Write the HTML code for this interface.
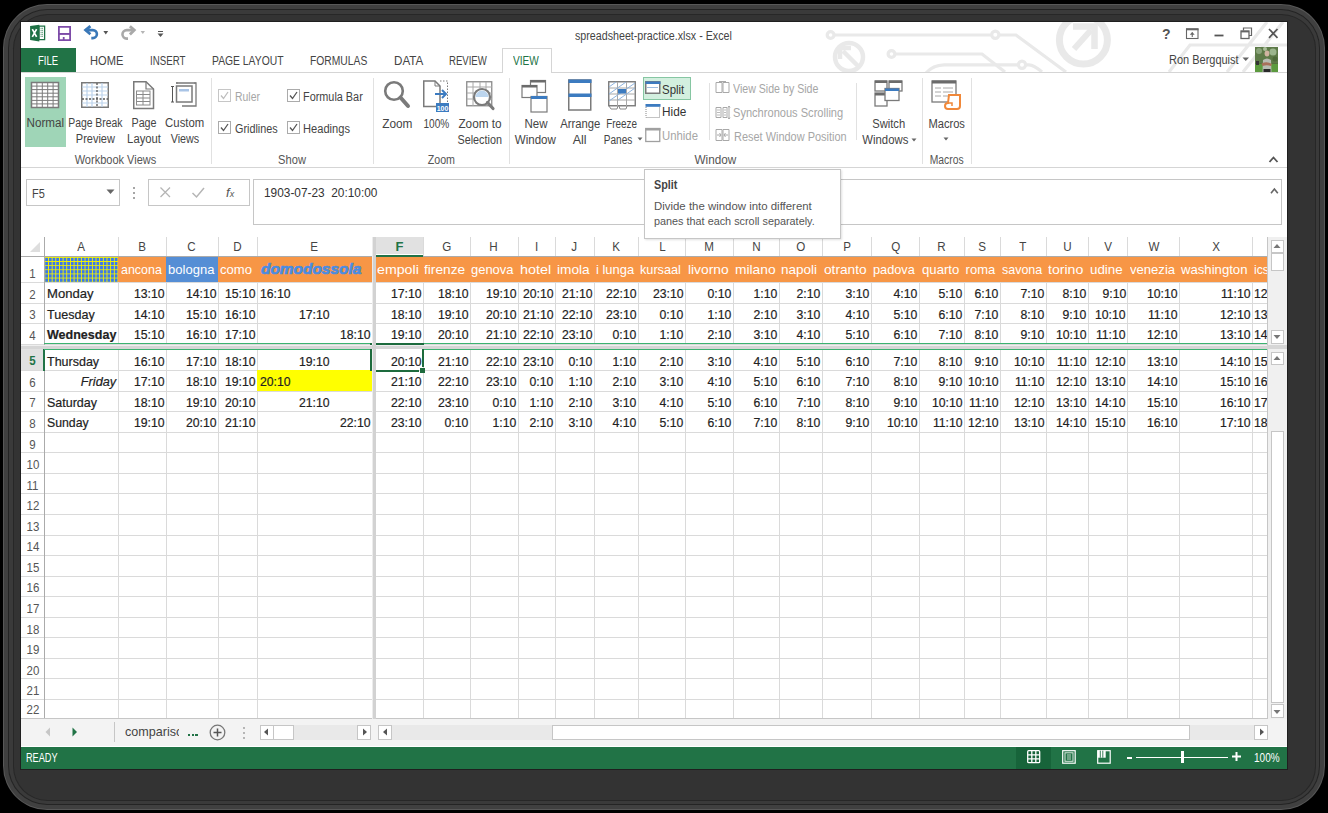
<!DOCTYPE html>
<html><head><meta charset="utf-8"><style>
html,body{margin:0;padding:0;}
body{width:1328px;height:813px;background:#000;position:relative;overflow:hidden;font-family:"Liberation Sans", sans-serif;}
.r{position:absolute;}
.t{position:absolute;line-height:1;white-space:nowrap;}
.t span{display:inline-block;}
svg.r{overflow:visible;}
</style></head><body>
<div class="r" style="left:3.00px;top:4.00px;width:1322.00px;height:806.00px;border-radius:44px;background:#585858;"></div>
<div class="r" style="left:4.20px;top:5.20px;width:1319.60px;height:803.60px;border-radius:42.8px;background:#404040;"></div>
<div class="r" style="left:8.00px;top:9.00px;width:1312.00px;height:796.00px;border-radius:39px;background:#242424;"></div>
<div class="r" style="left:9.00px;top:10.00px;width:1310.00px;height:794.00px;border-radius:38px;background:#3a3a3a;"></div>
<div class="r" style="left:12.50px;top:13.50px;width:1303.00px;height:787.00px;border-radius:34.5px;background:#272727;"></div>
<div class="r" style="left:13.50px;top:14.50px;width:1301.00px;height:785.00px;border-radius:33.5px;background:#333333;"></div>
<div class="r" style="left:20.00px;top:21.00px;width:1268.00px;height:749.00px;background:#1f1f1f;"></div>
<div class="r" style="left:21.00px;top:22.00px;width:1266.00px;height:747.00px;background:#fff;"></div>
<svg class="r" style="left:821px;top:22px;overflow:hidden" width="466" height="50" viewBox="0 0 466 50"><g transform="translate(-821,-22)" stroke="#e9e9e9" fill="none">
<g stroke-width="3.2">
<path d="M834 35 H991.5 M999 35 H1016 L1066 72"/><circle cx="830.6" cy="35" r="3.4"/><circle cx="995.3" cy="34.8" r="3.6"/>
<path d="M895 54 H982 L1005 72"/><circle cx="891.5" cy="54" r="3.4"/>
<path d="M926 73 Q933 65 944 64.8 H1018 M1025.5 64.8 H1029 Q1034 65 1042 72"/><circle cx="1022" cy="64.8" r="3.6"/>
<path d="M1169 72 L1190 45 H1290 M1227 72 L1267 22 M1243 72 L1283 22"/>
</g>
<circle cx="849" cy="57" r="14" stroke-width="4.5"/><path d="M858 66 L843 51" stroke-width="4.5"/><path d="M840 59 V48 H851" stroke-width="4.5"/>
<circle cx="1083.4" cy="40" r="24" stroke-width="7"/><path d="M1074 49 L1091 30" stroke-width="6"/><path d="M1073 26.5 H1094.5 V49" stroke-width="6.5"/>
</g></svg>
<div class="t" id="t1" style="left:575.00px;top:30.34px;font-size:12px;color:#444;"><span style="transform:scaleX(0.8905);transform-origin:0 0">spreadsheet-practice.xlsx - Excel</span></div>
<svg class="r" style="left:29px;top:24px;" width="18" height="19" viewBox="0 0 18 19">
<path d="M10 2.2 H15.6 V15.6 H10 Z" fill="#fff" stroke="#1e7145" stroke-width="1.3"/>
<path d="M11.6 4.3 H14 M11.6 6.3 H14 M11.6 8.3 H14 M11.6 10.3 H14 M11.6 12.3 H14" stroke="#1e7145" stroke-width="0.9" stroke-dasharray="1,0.6"/>
<path d="M1.1 2 L10.3 0.8 V17.4 L1.1 16 Z" fill="#1e7145"/>
<path d="M3.3 5.2 L7.6 12.8 M7.6 5.2 L3.3 12.8" stroke="#fff" stroke-width="1.7"/></svg>
<svg class="r" style="left:58px;top:26px;" width="13" height="15" viewBox="0 0 13 15">
<path d="M0.9 0.9 H12.1 V14.1 H0.9 Z" fill="#fff" stroke="#7d4ba8" stroke-width="1.8"/>
<rect x="0.9" y="7" width="11.2" height="1.9" fill="#7d4ba8"/>
<rect x="4.8" y="11" width="1.8" height="3" fill="#7d4ba8"/></svg>
<svg class="r" style="left:83px;top:25px;" width="28" height="16" viewBox="0 0 28 16">
<path d="M2.6 5.1 H9.9 A4 4 0 0 1 9.9 13.1 H8.3" fill="none" stroke="#3a78b8" stroke-width="2.6"/>
<path d="M7.4 1.2 L2.6 5.1 L7.4 9.2" fill="none" stroke="#3a78b8" stroke-width="2.8" stroke-linejoin="miter"/>
<path d="M20.4 5.9 H25.2 L22.8 9.5 Z" fill="#555"/></svg>
<svg class="r" style="left:120px;top:25px;" width="28" height="16" viewBox="0 0 28 16">
<path d="M14 5.1 H6.7 A4.25 4.25 0 0 0 6.7 13.6 H8" fill="none" stroke="#a9a9a9" stroke-width="2.6"/>
<path d="M9.9 1.2 L14.3 5.1 L9.9 9.4" fill="none" stroke="#a9a9a9" stroke-width="2.8"/>
<path d="M20.6 5.9 H25 L22.8 9 Z" fill="#b5b5b5"/></svg>
<svg class="r" style="left:156px;top:29px;" width="9" height="10" viewBox="0 0 9 10"><path d="M2 2.5 H7" stroke="#555" stroke-width="1"/><path d="M1.5 4.5 H7.5 L4.5 8 Z" fill="#555"/></svg>
<div class="t" id="t2" style="left:1162.00px;top:26.65px;font-size:14px;color:#555;font-weight:bold;"><span>?</span></div>
<svg class="r" style="left:1185px;top:27px;" width="15" height="13" viewBox="0 0 15 13"><rect x="1.5" y="2" width="11.5" height="9.5" fill="none" stroke="#666" stroke-width="1.1"/><path d="M1 2.3 H13.5" stroke="#666" stroke-width="2"/><path d="M7.25 10 V5.5" stroke="#666" stroke-width="1.1"/><path d="M4.8 7.8 L7.25 5 L9.7 7.8 Z" fill="#666"/></svg>
<svg class="r" style="left:1213px;top:27px;" width="12" height="13" viewBox="0 0 12 13"><path d="M1.5 8.5 H10.5" stroke="#555" stroke-width="1.8"/></svg>
<svg class="r" style="left:1240px;top:27px;" width="13" height="13" viewBox="0 0 13 13"><path d="M3.5 3.5 V1 H11.5 V8.5 H9" fill="none" stroke="#666" stroke-width="1.2"/><rect x="1" y="4" width="8" height="7.5" fill="none" stroke="#666" stroke-width="1.3"/><path d="M1 4.6 H9" stroke="#666" stroke-width="1.6"/></svg>
<svg class="r" style="left:1266px;top:27px;" width="14" height="13" viewBox="0 0 14 13"><path d="M3 2 L11.5 10.8 M11.5 2 L3 10.8" stroke="#555" stroke-width="1.7"/></svg>
<div class="t" id="t3" style="left:1169.00px;top:54.34px;font-size:12px;color:#444;"><span style="transform:scaleX(0.9152);transform-origin:0 0">Ron Bergquist</span></div>
<svg class="r" style="left:1242px;top:57px;" width="8" height="5" viewBox="0 0 8 5"><path d="M0.5 0.5 H7 L3.75 4 Z" fill="#666"/></svg>
<svg class="r" style="left:1255px;top:47px;" width="23" height="25" viewBox="0 0 23 25">
<rect width="23" height="25" fill="#55713f"/>
<rect x="0" y="0" width="23" height="16" fill="#5d7a48"/>
<circle cx="4" cy="4" r="3" fill="#8aa37a"/><circle cx="18" cy="5" r="3.5" fill="#9bb58d"/><circle cx="10" cy="2" r="2" fill="#a9bd9a"/><circle cx="20" cy="12" r="2.5" fill="#4d6a3a"/>
<rect x="0" y="17" width="23" height="8" fill="#5c9a3f"/>
<rect x="1" y="14" width="3" height="4" fill="#333"/>
<path d="M8 13 Q12 10 16 13 L16.5 25 H7.5 Z" fill="#b8bcb2"/>
<ellipse cx="12" cy="6.5" rx="2.4" ry="3" fill="#cfb3a0"/>
<path d="M6.5 16.5 Q12 14 17 17 L16 19 Q12 17.5 7.5 19 Z" fill="#a8705a"/>
<rect x="8.5" y="22" width="7" height="3" fill="#2a2a2a"/></svg>
<div class="r" style="left:21.00px;top:47.50px;width:54.70px;height:25.20px;background:#217346;"></div>
<div class="t" id="t4" style="left:37.80px;top:55.04px;font-size:12px;color:#fff;"><span style="transform:scaleX(0.7931);transform-origin:0 0">FILE</span></div>
<div class="r" style="left:21.00px;top:72.00px;width:481.00px;height:1.00px;background:#d5d5d5;"></div>
<div class="r" style="left:552.00px;top:72.00px;width:735.00px;height:1.00px;background:#d5d5d5;"></div>
<div class="r" style="left:502.00px;top:47.50px;width:50.00px;height:25.00px;border:1px solid #d5d5d5;border-bottom:none;box-sizing:border-box;background:#fff;"></div>
<div class="t" id="t5" style="left:90.30px;top:55.04px;font-size:12px;color:#444;"><span style="transform:scaleX(0.9250);transform-origin:0 0">HOME</span></div>
<div class="t" id="t6" style="left:149.90px;top:55.04px;font-size:12px;color:#444;"><span style="transform:scaleX(0.8083);transform-origin:0 0">INSERT</span></div>
<div class="t" id="t7" style="left:212.30px;top:55.04px;font-size:12px;color:#444;"><span style="transform:scaleX(0.8623);transform-origin:0 0">PAGE LAYOUT</span></div>
<div class="t" id="t8" style="left:310.30px;top:55.04px;font-size:12px;color:#444;"><span style="transform:scaleX(0.8592);transform-origin:0 0">FORMULAS</span></div>
<div class="t" id="t9" style="left:393.80px;top:55.04px;font-size:12px;color:#444;"><span style="transform:scaleX(0.9691);transform-origin:0 0">DATA</span></div>
<div class="t" id="t10" style="left:449.30px;top:55.04px;font-size:12px;color:#444;"><span style="transform:scaleX(0.7984);transform-origin:0 0">REVIEW</span></div>
<div class="t" id="t11" style="left:513.30px;top:55.04px;font-size:12px;color:#217346;"><span style="transform:scaleX(0.8412);transform-origin:0 0">VIEW</span></div>
<div class="r" style="left:21.00px;top:167.00px;width:1266.00px;height:1.00px;background:#d5d5d5;"></div>
<div class="r" style="left:211.00px;top:78.00px;width:1.00px;height:86.00px;background:#e1e1e1;"></div>
<div class="r" style="left:373.00px;top:78.00px;width:1.00px;height:86.00px;background:#e1e1e1;"></div>
<div class="r" style="left:508.60px;top:78.00px;width:1.00px;height:86.00px;background:#e1e1e1;"></div>
<div class="r" style="left:922.00px;top:78.00px;width:1.00px;height:86.00px;background:#e1e1e1;"></div>
<div class="r" style="left:970.60px;top:78.00px;width:1.00px;height:86.00px;background:#e1e1e1;"></div>
<div class="r" style="left:708.60px;top:83.00px;width:1.00px;height:57.00px;background:#e1e1e1;"></div>
<div class="r" style="left:856.00px;top:83.00px;width:1.00px;height:57.00px;background:#e1e1e1;"></div>
<div class="r" style="left:24.80px;top:76.60px;width:41.50px;height:70.10px;background:#9fd5b7;"></div>
<div class="t" id="t12" style="left:-15.00px;top:117.14px;font-size:12px;color:#444;width:120.00px;text-align:center;"><span style="transform:scaleX(0.9697);transform-origin:50% 0">Normal</span></div>
<div class="t" id="t13" style="left:35.25px;top:117.14px;font-size:12px;color:#444;width:120.00px;text-align:center;"><span style="transform:scaleX(0.8658);transform-origin:50% 0">Page Break</span></div>
<div class="t" id="t14" style="left:35.60px;top:133.24px;font-size:12px;color:#444;width:120.00px;text-align:center;"><span style="transform:scaleX(0.9136);transform-origin:50% 0">Preview</span></div>
<div class="t" id="t15" style="left:84.45px;top:117.14px;font-size:12px;color:#444;width:120.00px;text-align:center;"><span style="transform:scaleX(0.8954);transform-origin:50% 0">Page</span></div>
<div class="t" id="t16" style="left:84.50px;top:133.24px;font-size:12px;color:#444;width:120.00px;text-align:center;"><span style="transform:scaleX(0.9381);transform-origin:50% 0">Layout</span></div>
<div class="t" id="t17" style="left:125.15px;top:117.14px;font-size:12px;color:#444;width:120.00px;text-align:center;"><span style="transform:scaleX(0.9457);transform-origin:50% 0">Custom</span></div>
<div class="t" id="t18" style="left:125.05px;top:133.24px;font-size:12px;color:#444;width:120.00px;text-align:center;"><span style="transform:scaleX(0.8963);transform-origin:50% 0">Views</span></div>
<div class="t" id="t19" style="left:55.40px;top:153.84px;font-size:12px;color:#555;width:120.00px;text-align:center;"><span style="transform:scaleX(0.9175);transform-origin:50% 0">Workbook Views</span></div>
<div class="t" id="t20" style="left:232.30px;top:153.84px;font-size:12px;color:#555;width:120.00px;text-align:center;"><span style="transform:scaleX(0.9257);transform-origin:50% 0">Show</span></div>
<div class="t" id="t21" style="left:381.00px;top:153.84px;font-size:12px;color:#555;width:120.00px;text-align:center;"><span style="transform:scaleX(0.8896);transform-origin:50% 0">Zoom</span></div>
<div class="t" id="t22" style="left:655.20px;top:153.84px;font-size:12px;color:#555;width:120.00px;text-align:center;"><span style="transform:scaleX(0.9792);transform-origin:50% 0">Window</span></div>
<div class="t" id="t23" style="left:886.50px;top:153.84px;font-size:12px;color:#555;width:120.00px;text-align:center;"><span style="transform:scaleX(0.8591);transform-origin:50% 0">Macros</span></div>
<svg class="r" style="left:31px;top:82px;" width="28" height="26" viewBox="0 0 28 26"><rect x="0.5" y="0.5" width="27" height="25" fill="#fff" stroke="#7a7a7a" stroke-width="1.5"/><path d="M5.9 1 V25" stroke="#7a7a7a" stroke-width="1"/><path d="M11.3 1 V25" stroke="#7a7a7a" stroke-width="1"/><path d="M16.7 1 V25" stroke="#7a7a7a" stroke-width="1"/><path d="M22.1 1 V25" stroke="#7a7a7a" stroke-width="1"/><path d="M1 4.1 H27" stroke="#7a7a7a" stroke-width="1"/><path d="M1 7.6 H27" stroke="#7a7a7a" stroke-width="1"/><path d="M1 11.2 H27" stroke="#7a7a7a" stroke-width="1"/><path d="M1 14.8 H27" stroke="#7a7a7a" stroke-width="1"/><path d="M1 18.4 H27" stroke="#7a7a7a" stroke-width="1"/><path d="M1 21.9 H27" stroke="#7a7a7a" stroke-width="1"/></svg>
<svg class="r" style="left:81px;top:82px;" width="28" height="26" viewBox="0 0 28 26"><rect x="0.75" y="0.75" width="26.5" height="24.5" fill="#fff" stroke="#7a7a7a" stroke-width="1.5"/>
<path d="M6 1 V25 M11 1 V25 M21 1 V25 M1 5 H27 M1 9 H27 M1 13 H27 M1 21 H27" stroke="#bcd3ec" stroke-width="1.2"/>
<path d="M16 1 V25" stroke="#555" stroke-width="1.3" stroke-dasharray="2,1.5"/><path d="M1 17 H27" stroke="#555" stroke-width="1.3" stroke-dasharray="2,1.5"/></svg>
<svg class="r" style="left:133px;top:81px;" width="22" height="29" viewBox="0 0 22 29"><path d="M0.75 0.75 H13 L20.5 8 V27.5 H0.75 Z" fill="#fff" stroke="#7a7a7a" stroke-width="1.5"/><path d="M13 0.75 V8 H20.5" fill="none" stroke="#7a7a7a" stroke-width="1.2"/>
<rect x="3.5" y="10" width="13.5" height="14" fill="none" stroke="#8a8a8a" stroke-width="1"/><path d="M3.5 13.5 H17 M3.5 17 H17 M3.5 20.5 H17 M10 10 V24" stroke="#8a8a8a" stroke-width="1"/></svg>
<svg class="r" style="left:171px;top:81px;" width="28" height="28" viewBox="0 0 28 28"><path d="M5 2 H25 V25 H11" fill="none" stroke="#7a7a7a" stroke-width="1.3"/><path d="M6 1 V3 M24 1 V3" stroke="#7a7a7a"/>
<rect x="5.5" y="5" width="15.5" height="16" fill="#fff" stroke="#7a7a7a" stroke-width="1.5"/><rect x="8" y="8" width="10" height="2.5" fill="#a9c4e6"/>
<path d="M1.5 5.5 V21 M0 5.5 H3 M0 21 H3" stroke="#555" stroke-width="1"/></svg>
<svg class="r" style="left:218px;top:88.5px;" width="13" height="13" viewBox="0 0 13 13"><rect x="0.5" y="0.5" width="12" height="12" fill="#fff" stroke="#c6c6c6"/><path d="M3 6.5 L5.5 9.5 L10 3" fill="none" stroke="#bdbdbd" stroke-width="1.3"/></svg>
<div class="t" id="t24" style="left:234.60px;top:90.84px;font-size:12px;color:#a6a6a6;"><span style="transform:scaleX(0.8680);transform-origin:0 0">Ruler</span></div>
<svg class="r" style="left:287px;top:88.5px;" width="13" height="13" viewBox="0 0 13 13"><rect x="0.5" y="0.5" width="12" height="12" fill="#fff" stroke="#ababab"/><path d="M3 6.5 L5.5 9.5 L10 3" fill="none" stroke="#555" stroke-width="1.3"/></svg>
<div class="t" id="t25" style="left:302.80px;top:90.84px;font-size:12px;color:#444;"><span style="transform:scaleX(0.9056);transform-origin:0 0">Formula Bar</span></div>
<svg class="r" style="left:218px;top:120.7px;" width="13" height="13" viewBox="0 0 13 13"><rect x="0.5" y="0.5" width="12" height="12" fill="#fff" stroke="#ababab"/><path d="M3 6.5 L5.5 9.5 L10 3" fill="none" stroke="#555" stroke-width="1.3"/></svg>
<div class="t" id="t26" style="left:234.60px;top:123.14px;font-size:12px;color:#444;"><span style="transform:scaleX(0.9016);transform-origin:0 0">Gridlines</span></div>
<svg class="r" style="left:287px;top:120.7px;" width="13" height="13" viewBox="0 0 13 13"><rect x="0.5" y="0.5" width="12" height="12" fill="#fff" stroke="#ababab"/><path d="M3 6.5 L5.5 9.5 L10 3" fill="none" stroke="#555" stroke-width="1.3"/></svg>
<div class="t" id="t27" style="left:302.80px;top:123.14px;font-size:12px;color:#444;"><span style="transform:scaleX(0.9270);transform-origin:0 0">Headings</span></div>
<svg class="r" style="left:383px;top:80px;" width="28" height="30" viewBox="0 0 28 30"><circle cx="11" cy="11" r="8.8" fill="none" stroke="#7a7a7a" stroke-width="2.6"/><path d="M17.5 17.5 L25 26" stroke="#7a7a7a" stroke-width="4" stroke-linecap="round"/></svg>
<div class="t" id="t28" style="left:337.00px;top:117.64px;font-size:12px;color:#444;width:120.00px;text-align:center;"><span style="transform:scaleX(0.9874);transform-origin:50% 0">Zoom</span></div>
<svg class="r" style="left:423px;top:80px;" width="27" height="33" viewBox="0 0 27 33"><path d="M0.75 1 H12 L17 6 V26.5 H0.75 Z" fill="#fff" stroke="#7a7a7a" stroke-width="1.5"/><path d="M12 1 V6 H17" fill="none" stroke="#7a7a7a"/>
<path d="M17 1 H24.5 V26" fill="none" stroke="#7a7a7a" stroke-dasharray="1.5,1.5"/>
<path d="M12 14 H23 M19 10 L23 14 L19 18" fill="none" stroke="#3c7bc0" stroke-width="2"/>
<rect x="13" y="23" width="13" height="9" fill="#3c7bc0"/><text x="19.5" y="30.5" font-size="7" font-weight="bold" fill="#fff" text-anchor="middle" font-family="Liberation Sans">100</text></svg>
<div class="t" id="t29" style="left:376.50px;top:117.64px;font-size:12px;color:#444;width:120.00px;text-align:center;"><span style="transform:scaleX(0.8403);transform-origin:50% 0">100%</span></div>
<svg class="r" style="left:466px;top:81px;" width="30" height="30" viewBox="0 0 30 30"><rect x="0.75" y="0.75" width="25" height="24" fill="#fff" stroke="#8a8a8a" stroke-width="1.3"/>
<path d="M1 6 H26 M1 12 H26 M1 18 H26 M7 1 V25 M14 1 V8 M20 1 V25" stroke="#a8a8a8" stroke-width="1"/>
<circle cx="16" cy="16" r="8" fill="#fff" stroke="#7a7a7a" stroke-width="2.2"/><path d="M9.5 16 A6.5 6.5 0 0 1 22.5 16 Z" fill="#bcd5ee"/><path d="M21.5 21.5 L27 27.5" stroke="#7a7a7a" stroke-width="3.2" stroke-linecap="round"/></svg>
<div class="t" id="t30" style="left:419.80px;top:117.64px;font-size:12px;color:#444;width:120.00px;text-align:center;"><span style="transform:scaleX(0.9815);transform-origin:50% 0">Zoom to</span></div>
<div class="t" id="t31" style="left:419.80px;top:133.64px;font-size:12px;color:#444;width:120.00px;text-align:center;"><span style="transform:scaleX(0.8992);transform-origin:50% 0">Selection</span></div>
<svg class="r" style="left:521px;top:79px;" width="28" height="35" viewBox="0 0 28 35"><rect x="9.5" y="1.5" width="15" height="12" fill="#fff" stroke="#7a7a7a" stroke-width="1.2"/><rect x="9.5" y="1" width="15" height="2.5" fill="#6b6b6b"/>
<rect x="1" y="6.5" width="15" height="12" fill="#fff" stroke="#7a7a7a" stroke-width="1.2"/><rect x="1" y="6" width="15" height="2.5" fill="#6b6b6b"/>
<rect x="10" y="17.5" width="16" height="15.5" fill="#fff" stroke="#7a7a7a" stroke-width="1.2"/><rect x="10" y="17" width="16" height="3" fill="#3c7bc0"/></svg>
<div class="t" id="t32" style="left:475.90px;top:117.54px;font-size:12px;color:#444;width:120.00px;text-align:center;"><span style="transform:scaleX(0.9577);transform-origin:50% 0">New</span></div>
<div class="t" id="t33" style="left:475.45px;top:133.54px;font-size:12px;color:#444;width:120.00px;text-align:center;"><span style="transform:scaleX(0.9628);transform-origin:50% 0">Window</span></div>
<svg class="r" style="left:568px;top:79px;" width="24" height="33" viewBox="0 0 24 33"><rect x="0.75" y="1" width="22" height="30" fill="#fff" stroke="#7a7a7a" stroke-width="1.5"/><rect x="0.5" y="0.5" width="23" height="3.5" fill="#3c7bc0"/><rect x="0.5" y="14.5" width="23" height="3.5" fill="#3c7bc0"/></svg>
<div class="t" id="t34" style="left:519.95px;top:117.54px;font-size:12px;color:#444;width:120.00px;text-align:center;"><span style="transform:scaleX(0.9390);transform-origin:50% 0">Arrange</span></div>
<div class="t" id="t35" style="left:519.85px;top:133.54px;font-size:12px;color:#444;width:120.00px;text-align:center;"><span style="transform:scaleX(1.0417);transform-origin:50% 0">All</span></div>
<svg class="r" style="left:608px;top:81px;" width="29" height="29" viewBox="0 0 29 29"><rect x="0.75" y="0.75" width="26.5" height="24" fill="#fff" stroke="#7a7a7a" stroke-width="1.4"/>
<path d="M1 7 H27 M1 13 H27 M1 19 H27 M9.5 1 V25 M18.5 1 V25" stroke="#a8a8a8"/>
<path d="M1 6 L8 1 M1 13 L18 1 M1 20 L27 2 M10 19 L27 7" stroke="#8fb4de" stroke-width="1"/>
<rect x="10" y="8" width="8" height="4.5" fill="#3c7bc0"/>
<path d="M1 25 L3 28 H9 L10 25 M11 25 L12 28 H18 L19 25" fill="none" stroke="#8a8a8a"/></svg>
<div class="t" id="t36" style="left:562.00px;top:117.54px;font-size:12px;color:#444;width:120.00px;text-align:center;"><span style="transform:scaleX(0.8244);transform-origin:50% 0">Freeze</span></div>
<div class="t" id="t37" style="left:558.45px;top:133.54px;font-size:12px;color:#444;width:120.00px;text-align:center;"><span style="transform:scaleX(0.8375);transform-origin:50% 0">Panes</span></div>
<svg class="r" style="left:637px;top:137px;" width="6" height="5" viewBox="0 0 6 5"><path d="M0.5 0.5 H5.5 L3 3.5 Z" fill="#666"/></svg>
<div class="r" style="left:643.00px;top:76.60px;width:47.80px;height:23.10px;background:#d3efdf;border:1px solid #86c6a2;box-sizing:border-box;"></div>
<svg class="r" style="left:645px;top:81px;" width="16" height="14" viewBox="0 0 16 14"><rect x="0.75" y="0.75" width="14" height="11.5" fill="#fff" stroke="#7a7a7a" stroke-width="1.5"/><rect x="0.5" y="0.5" width="15" height="2.5" fill="#3c7bc0"/><path d="M2.5 6.5 H13" stroke="#3c7bc0" stroke-dasharray="1,1"/></svg>
<div class="t" id="t38" style="left:662.20px;top:83.84px;font-size:12px;color:#333;"><span style="transform:scaleX(0.9553);transform-origin:0 0">Split</span></div>
<svg class="r" style="left:645px;top:103px;" width="16" height="16" viewBox="0 0 16 16"><rect x="0.5" y="1" width="15" height="2.8" fill="#3c7bc0"/><path d="M1 4 V14.5 H14.5 V4" fill="none" stroke="#888" stroke-dasharray="1,1"/></svg>
<div class="t" id="t39" style="left:662.20px;top:106.44px;font-size:12px;color:#333;"><span style="transform:scaleX(0.9843);transform-origin:0 0">Hide</span></div>
<svg class="r" style="left:645px;top:127px;" width="16" height="16" viewBox="0 0 16 16"><rect x="0.75" y="1.5" width="14" height="13" fill="#fff" stroke="#a0a0a0" stroke-width="1.3"/><rect x="0.5" y="1" width="15" height="2.5" fill="#a0a0a0"/></svg>
<div class="t" id="t40" style="left:662.20px;top:130.24px;font-size:12px;color:#a6a6a6;"><span style="transform:scaleX(0.9466);transform-origin:0 0">Unhide</span></div>
<svg class="r" style="left:715px;top:81px;" width="16" height="13" viewBox="0 0 16 13"><path d="M1 1.5 H7 V11.5 H1 Z M8 1.5 H14 V11.5 H8 Z" fill="#fff" stroke="#a8a8a8"/><path d="M4 0.5 H11" stroke="#a8a8a8"/></svg>
<div class="t" id="t41" style="left:733.40px;top:83.24px;font-size:12px;color:#a6a6a6;"><span style="transform:scaleX(0.8848);transform-origin:0 0">View Side by Side</span></div>
<svg class="r" style="left:715px;top:105px;" width="16" height="15" viewBox="0 0 16 15"><path d="M1 2.5 H6 V12.5 H1 Z M8 2.5 H12 V12.5 H8 Z" fill="#fff" stroke="#a8a8a8"/><path d="M2 5 H5 M2 7.5 H5 M2 10 H5 M9 5 H11 M9 7.5 H11 M9 10 H11" stroke="#bbb"/><path d="M14 1 V14 M13 2.5 L14 1 L15 2.5 M13 12.5 L14 14 L15 12.5" fill="none" stroke="#a8a8a8"/></svg>
<div class="t" id="t42" style="left:733.40px;top:106.84px;font-size:12px;color:#a6a6a6;"><span style="transform:scaleX(0.9229);transform-origin:0 0">Synchronous Scrolling</span></div>
<svg class="r" style="left:715px;top:128px;" width="16" height="14" viewBox="0 0 16 14"><path d="M1 1.5 H7 V12.5 H1 Z M8 1.5 H14 V12.5 H8 Z" fill="#fff" stroke="#a8a8a8"/><path d="M2 7 H6 M4.5 5 L6 7 L4.5 9 M13 7 H9 M10.5 5 L9 7 L10.5 9" fill="none" stroke="#a8a8a8"/></svg>
<div class="t" id="t43" style="left:733.90px;top:130.64px;font-size:12px;color:#a6a6a6;"><span style="transform:scaleX(0.9125);transform-origin:0 0">Reset Window Position</span></div>
<svg class="r" style="left:874px;top:80px;" width="30" height="28" viewBox="0 0 30 28"><rect x="1" y="1" width="12" height="10" fill="#fff" stroke="#7a7a7a" stroke-width="1.3"/><rect x="1" y="0.5" width="12" height="2.5" fill="#6b6b6b"/>
<rect x="15" y="1" width="13" height="10" fill="#fff" stroke="#7a7a7a" stroke-width="1.3"/><rect x="15" y="0.5" width="13" height="2.5" fill="#6b6b6b"/>
<rect x="1" y="13" width="12" height="13" fill="#fff" stroke="#7a7a7a" stroke-width="1.3"/><rect x="1" y="13" width="12" height="2.5" fill="#6b6b6b"/>
<rect x="11" y="8.5" width="14" height="12" fill="#fff" stroke="#7a7a7a" stroke-width="1.3"/><rect x="11" y="8.5" width="14" height="2.5" fill="#3c7bc0"/></svg>
<div class="t" id="t44" style="left:828.90px;top:118.24px;font-size:12px;color:#444;width:120.00px;text-align:center;"><span style="transform:scaleX(0.9337);transform-origin:50% 0">Switch</span></div>
<div class="t" id="t45" style="left:825.20px;top:134.04px;font-size:12px;color:#444;width:120.00px;text-align:center;"><span style="transform:scaleX(0.9448);transform-origin:50% 0">Windows</span></div>
<svg class="r" style="left:911px;top:138px;" width="6" height="5" viewBox="0 0 6 5"><path d="M0.5 0.5 H5.5 L3 3.5 Z" fill="#666"/></svg>
<svg class="r" style="left:931px;top:80px;" width="33" height="32" viewBox="0 0 33 32"><rect x="1" y="1" width="24" height="21" fill="#fff" stroke="#7a7a7a" stroke-width="1.3"/><rect x="1" y="0.5" width="24" height="3" fill="#6b6b6b"/>
<path d="M4 8 H10 M12 8 H22 M4 12 H10 M12 12 H22 M4 16 H10 M12 16 H18" stroke="#a8a8a8"/>
<path d="M18 15 H29 V26 A3 3 0 0 1 26 29 H17 A3 3 0 0 1 17 23 Z" fill="#fff" stroke="#f0883a" stroke-width="2"/><path d="M17 23 H21 V26" fill="none" stroke="#f0883a" stroke-width="1.5"/></svg>
<div class="t" id="t46" style="left:886.45px;top:118.24px;font-size:12px;color:#444;width:120.00px;text-align:center;"><span style="transform:scaleX(0.9277);transform-origin:50% 0">Macros</span></div>
<svg class="r" style="left:943px;top:137px;" width="6" height="5" viewBox="0 0 6 5"><path d="M0.5 0.5 H5.5 L3 3.5 Z" fill="#666"/></svg>
<svg class="r" style="left:1268px;top:155px;" width="11" height="9" viewBox="0 0 11 9"><path d="M1.5 7 L5.5 2.5 L9.5 7" fill="none" stroke="#555" stroke-width="1.8"/></svg>
<div class="r" style="left:26.00px;top:179.20px;width:94.00px;height:26.50px;border:1px solid #c6c6c6;box-sizing:border-box;"></div>
<div class="t" id="t47" style="left:31.80px;top:187.54px;font-size:12px;color:#444;"><span style="transform:scaleX(0.9133);transform-origin:0 0">F5</span></div>
<svg class="r" style="left:106px;top:189px;" width="9" height="6" viewBox="0 0 9 6"><path d="M0.5 0.5 H8.5 L4.5 5 Z" fill="#666"/></svg>
<svg class="r" style="left:132px;top:186px;" width="4" height="14" viewBox="0 0 4 14"><circle cx="2" cy="2" r="1" fill="#888"/><circle cx="2" cy="7" r="1" fill="#888"/><circle cx="2" cy="12" r="1" fill="#888"/></svg>
<div class="r" style="left:148.20px;top:179.20px;width:101.50px;height:26.50px;border:1px solid #c6c6c6;box-sizing:border-box;"></div>
<svg class="r" style="left:159px;top:186px;" width="13" height="13" viewBox="0 0 13 13"><path d="M1.5 1.5 L11 11 M11 1.5 L1.5 11" stroke="#b5b5b5" stroke-width="1.3"/></svg>
<svg class="r" style="left:191px;top:186px;" width="15" height="13" viewBox="0 0 15 13"><path d="M1.5 7 L5.5 11 L13 2" fill="none" stroke="#b5b5b5" stroke-width="1.5"/></svg>
<div class="t" id="t48" style="left:226.00px;top:186.00px;font-size:13px;color:#555;font-family:"Liberation Serif",serif;"><span><i>f</i><span style="font-size:9px;font-style:italic">x</span></span></div>
<div class="r" style="left:253.00px;top:179.20px;width:1029.00px;height:46.20px;border:1px solid #c6c6c6;box-sizing:border-box;"></div>
<div class="t" id="t49" style="left:264.30px;top:187.24px;font-size:12px;color:#333;"><span style="transform:scaleX(0.9881);transform-origin:0 0">1903-07-23&nbsp; 20:10:00</span></div>
<svg class="r" style="left:1269px;top:186px;" width="12" height="9" viewBox="0 0 12 9"><path d="M2 7.2 L5.4 3 L8.8 7.2" fill="none" stroke="#666" stroke-width="1.6"/></svg>
<div class="r" style="left:21.00px;top:282.00px;width:1246.00px;height:1.00px;background:#dadada;"></div>
<div class="r" style="left:21.00px;top:302.50px;width:1246.00px;height:1.00px;background:#dadada;"></div>
<div class="r" style="left:21.00px;top:323.10px;width:1246.00px;height:1.00px;background:#dadada;"></div>
<div class="r" style="left:21.00px;top:343.60px;width:1246.00px;height:1.00px;background:#dadada;"></div>
<div class="r" style="left:21.00px;top:370.15px;width:1246.00px;height:1.00px;background:#dadada;"></div>
<div class="r" style="left:21.00px;top:390.70px;width:1246.00px;height:1.00px;background:#dadada;"></div>
<div class="r" style="left:21.00px;top:411.25px;width:1246.00px;height:1.00px;background:#dadada;"></div>
<div class="r" style="left:21.00px;top:431.80px;width:1246.00px;height:1.00px;background:#dadada;"></div>
<div class="r" style="left:21.00px;top:452.35px;width:1246.00px;height:1.00px;background:#dadada;"></div>
<div class="r" style="left:21.00px;top:472.90px;width:1246.00px;height:1.00px;background:#dadada;"></div>
<div class="r" style="left:21.00px;top:493.45px;width:1246.00px;height:1.00px;background:#dadada;"></div>
<div class="r" style="left:21.00px;top:514.00px;width:1246.00px;height:1.00px;background:#dadada;"></div>
<div class="r" style="left:21.00px;top:534.55px;width:1246.00px;height:1.00px;background:#dadada;"></div>
<div class="r" style="left:21.00px;top:555.10px;width:1246.00px;height:1.00px;background:#dadada;"></div>
<div class="r" style="left:21.00px;top:575.65px;width:1246.00px;height:1.00px;background:#dadada;"></div>
<div class="r" style="left:21.00px;top:596.20px;width:1246.00px;height:1.00px;background:#dadada;"></div>
<div class="r" style="left:21.00px;top:616.75px;width:1246.00px;height:1.00px;background:#dadada;"></div>
<div class="r" style="left:21.00px;top:637.30px;width:1246.00px;height:1.00px;background:#dadada;"></div>
<div class="r" style="left:21.00px;top:657.85px;width:1246.00px;height:1.00px;background:#dadada;"></div>
<div class="r" style="left:21.00px;top:678.40px;width:1246.00px;height:1.00px;background:#dadada;"></div>
<div class="r" style="left:21.00px;top:698.95px;width:1246.00px;height:1.00px;background:#dadada;"></div>
<div class="r" style="left:117.50px;top:236.50px;width:1.00px;height:107.50px;background:#dadada;"></div>
<div class="r" style="left:117.50px;top:349.00px;width:1.00px;height:369.30px;background:#dadada;"></div>
<div class="r" style="left:165.50px;top:236.50px;width:1.00px;height:107.50px;background:#dadada;"></div>
<div class="r" style="left:165.50px;top:349.00px;width:1.00px;height:369.30px;background:#dadada;"></div>
<div class="r" style="left:217.50px;top:236.50px;width:1.00px;height:107.50px;background:#dadada;"></div>
<div class="r" style="left:217.50px;top:349.00px;width:1.00px;height:369.30px;background:#dadada;"></div>
<div class="r" style="left:256.50px;top:236.50px;width:1.00px;height:107.50px;background:#dadada;"></div>
<div class="r" style="left:256.50px;top:349.00px;width:1.00px;height:369.30px;background:#dadada;"></div>
<div class="r" style="left:422.50px;top:236.50px;width:1.00px;height:107.50px;background:#dadada;"></div>
<div class="r" style="left:422.50px;top:349.00px;width:1.00px;height:369.30px;background:#dadada;"></div>
<div class="r" style="left:469.50px;top:236.50px;width:1.00px;height:107.50px;background:#dadada;"></div>
<div class="r" style="left:469.50px;top:349.00px;width:1.00px;height:369.30px;background:#dadada;"></div>
<div class="r" style="left:517.50px;top:236.50px;width:1.00px;height:107.50px;background:#dadada;"></div>
<div class="r" style="left:517.50px;top:349.00px;width:1.00px;height:369.30px;background:#dadada;"></div>
<div class="r" style="left:554.50px;top:236.50px;width:1.00px;height:107.50px;background:#dadada;"></div>
<div class="r" style="left:554.50px;top:349.00px;width:1.00px;height:369.30px;background:#dadada;"></div>
<div class="r" style="left:593.50px;top:236.50px;width:1.00px;height:107.50px;background:#dadada;"></div>
<div class="r" style="left:593.50px;top:349.00px;width:1.00px;height:369.30px;background:#dadada;"></div>
<div class="r" style="left:638.10px;top:236.50px;width:1.00px;height:107.50px;background:#dadada;"></div>
<div class="r" style="left:638.10px;top:349.00px;width:1.00px;height:369.30px;background:#dadada;"></div>
<div class="r" style="left:685.10px;top:236.50px;width:1.00px;height:107.50px;background:#dadada;"></div>
<div class="r" style="left:685.10px;top:349.00px;width:1.00px;height:369.30px;background:#dadada;"></div>
<div class="r" style="left:732.80px;top:236.50px;width:1.00px;height:107.50px;background:#dadada;"></div>
<div class="r" style="left:732.80px;top:349.00px;width:1.00px;height:369.30px;background:#dadada;"></div>
<div class="r" style="left:778.80px;top:236.50px;width:1.00px;height:107.50px;background:#dadada;"></div>
<div class="r" style="left:778.80px;top:349.00px;width:1.00px;height:369.30px;background:#dadada;"></div>
<div class="r" style="left:822.10px;top:236.50px;width:1.00px;height:107.50px;background:#dadada;"></div>
<div class="r" style="left:822.10px;top:349.00px;width:1.00px;height:369.30px;background:#dadada;"></div>
<div class="r" style="left:871.00px;top:236.50px;width:1.00px;height:107.50px;background:#dadada;"></div>
<div class="r" style="left:871.00px;top:349.00px;width:1.00px;height:369.30px;background:#dadada;"></div>
<div class="r" style="left:918.90px;top:236.50px;width:1.00px;height:107.50px;background:#dadada;"></div>
<div class="r" style="left:918.90px;top:349.00px;width:1.00px;height:369.30px;background:#dadada;"></div>
<div class="r" style="left:963.50px;top:236.50px;width:1.00px;height:107.50px;background:#dadada;"></div>
<div class="r" style="left:963.50px;top:349.00px;width:1.00px;height:369.30px;background:#dadada;"></div>
<div class="r" style="left:999.50px;top:236.50px;width:1.00px;height:107.50px;background:#dadada;"></div>
<div class="r" style="left:999.50px;top:349.00px;width:1.00px;height:369.30px;background:#dadada;"></div>
<div class="r" style="left:1046.00px;top:236.50px;width:1.00px;height:107.50px;background:#dadada;"></div>
<div class="r" style="left:1046.00px;top:349.00px;width:1.00px;height:369.30px;background:#dadada;"></div>
<div class="r" style="left:1087.50px;top:236.50px;width:1.00px;height:107.50px;background:#dadada;"></div>
<div class="r" style="left:1087.50px;top:349.00px;width:1.00px;height:369.30px;background:#dadada;"></div>
<div class="r" style="left:1127.20px;top:236.50px;width:1.00px;height:107.50px;background:#dadada;"></div>
<div class="r" style="left:1127.20px;top:349.00px;width:1.00px;height:369.30px;background:#dadada;"></div>
<div class="r" style="left:1178.90px;top:236.50px;width:1.00px;height:107.50px;background:#dadada;"></div>
<div class="r" style="left:1178.90px;top:349.00px;width:1.00px;height:369.30px;background:#dadada;"></div>
<div class="r" style="left:1252.10px;top:236.50px;width:1.00px;height:107.50px;background:#dadada;"></div>
<div class="r" style="left:1252.10px;top:349.00px;width:1.00px;height:369.30px;background:#dadada;"></div>
<div class="r" style="left:21.00px;top:255.80px;width:351.00px;height:1.00px;background:#ababab;"></div>
<div class="r" style="left:376.00px;top:255.80px;width:891.00px;height:1.00px;background:#ababab;"></div>
<div class="r" style="left:43.60px;top:236.50px;width:1.00px;height:108.00px;background:#ababab;"></div>
<div class="r" style="left:43.60px;top:349.00px;width:1.00px;height:369.30px;background:#ababab;"></div>
<div class="r" style="left:21.00px;top:718.00px;width:1246.00px;height:1.00px;background:#c6c6c6;"></div>
<svg class="r" style="left:29px;top:241px;" width="12" height="12" viewBox="0 0 12 12"><path d="M11 1 V11 H1 Z" fill="#dedede"/></svg>
<div class="t" id="t50" style="left:44.00px;top:241.12px;font-size:12.5px;color:#444;width:74.00px;text-align:center;"><span style="transform:scaleX(0.9300);transform-origin:50% 0">A</span></div>
<div class="t" id="t51" style="left:118.00px;top:241.12px;font-size:12.5px;color:#444;width:48.00px;text-align:center;"><span style="transform:scaleX(0.9300);transform-origin:50% 0">B</span></div>
<div class="t" id="t52" style="left:166.00px;top:241.12px;font-size:12.5px;color:#444;width:52.00px;text-align:center;"><span style="transform:scaleX(0.9300);transform-origin:50% 0">C</span></div>
<div class="t" id="t53" style="left:218.00px;top:241.12px;font-size:12.5px;color:#444;width:39.00px;text-align:center;"><span style="transform:scaleX(0.9300);transform-origin:50% 0">D</span></div>
<div class="t" id="t54" style="left:257.00px;top:241.12px;font-size:12.5px;color:#444;width:115.00px;text-align:center;"><span style="transform:scaleX(0.9300);transform-origin:50% 0">E</span></div>
<div class="r" style="left:376.00px;top:237.00px;width:47.00px;height:16.50px;background:#e1e1e1;"></div>
<div class="r" style="left:376.00px;top:254.70px;width:47.00px;height:2.20px;background:#217346;"></div>
<div class="t" id="t55" style="left:376.00px;top:239.70px;font-size:13px;color:#217346;font-weight:bold;width:47.00px;text-align:center;"><span>F</span></div>
<div class="t" id="t56" style="left:423.00px;top:241.12px;font-size:12.5px;color:#444;width:47.00px;text-align:center;"><span style="transform:scaleX(0.9300);transform-origin:50% 0">G</span></div>
<div class="t" id="t57" style="left:470.00px;top:241.12px;font-size:12.5px;color:#444;width:48.00px;text-align:center;"><span style="transform:scaleX(0.9300);transform-origin:50% 0">H</span></div>
<div class="t" id="t58" style="left:518.00px;top:241.12px;font-size:12.5px;color:#444;width:37.00px;text-align:center;"><span style="transform:scaleX(0.9300);transform-origin:50% 0">I</span></div>
<div class="t" id="t59" style="left:555.00px;top:241.12px;font-size:12.5px;color:#444;width:39.00px;text-align:center;"><span style="transform:scaleX(0.9300);transform-origin:50% 0">J</span></div>
<div class="t" id="t60" style="left:594.00px;top:241.12px;font-size:12.5px;color:#444;width:44.60px;text-align:center;"><span style="transform:scaleX(0.9300);transform-origin:50% 0">K</span></div>
<div class="t" id="t61" style="left:638.60px;top:241.12px;font-size:12.5px;color:#444;width:47.00px;text-align:center;"><span style="transform:scaleX(0.9300);transform-origin:50% 0">L</span></div>
<div class="t" id="t62" style="left:685.60px;top:241.12px;font-size:12.5px;color:#444;width:47.70px;text-align:center;"><span style="transform:scaleX(0.9300);transform-origin:50% 0">M</span></div>
<div class="t" id="t63" style="left:733.30px;top:241.12px;font-size:12.5px;color:#444;width:46.00px;text-align:center;"><span style="transform:scaleX(0.9300);transform-origin:50% 0">N</span></div>
<div class="t" id="t64" style="left:779.30px;top:241.12px;font-size:12.5px;color:#444;width:43.30px;text-align:center;"><span style="transform:scaleX(0.9300);transform-origin:50% 0">O</span></div>
<div class="t" id="t65" style="left:822.60px;top:241.12px;font-size:12.5px;color:#444;width:48.90px;text-align:center;"><span style="transform:scaleX(0.9300);transform-origin:50% 0">P</span></div>
<div class="t" id="t66" style="left:871.50px;top:241.12px;font-size:12.5px;color:#444;width:47.90px;text-align:center;"><span style="transform:scaleX(0.9300);transform-origin:50% 0">Q</span></div>
<div class="t" id="t67" style="left:919.40px;top:241.12px;font-size:12.5px;color:#444;width:44.60px;text-align:center;"><span style="transform:scaleX(0.9300);transform-origin:50% 0">R</span></div>
<div class="t" id="t68" style="left:964.00px;top:241.12px;font-size:12.5px;color:#444;width:36.00px;text-align:center;"><span style="transform:scaleX(0.9300);transform-origin:50% 0">S</span></div>
<div class="t" id="t69" style="left:1000.00px;top:241.12px;font-size:12.5px;color:#444;width:46.50px;text-align:center;"><span style="transform:scaleX(0.9300);transform-origin:50% 0">T</span></div>
<div class="t" id="t70" style="left:1046.50px;top:241.12px;font-size:12.5px;color:#444;width:41.50px;text-align:center;"><span style="transform:scaleX(0.9300);transform-origin:50% 0">U</span></div>
<div class="t" id="t71" style="left:1088.00px;top:241.12px;font-size:12.5px;color:#444;width:39.70px;text-align:center;"><span style="transform:scaleX(0.9300);transform-origin:50% 0">V</span></div>
<div class="t" id="t72" style="left:1127.70px;top:241.12px;font-size:12.5px;color:#444;width:51.70px;text-align:center;"><span style="transform:scaleX(0.9300);transform-origin:50% 0">W</span></div>
<div class="t" id="t73" style="left:1179.40px;top:241.12px;font-size:12.5px;color:#444;width:73.20px;text-align:center;"><span style="transform:scaleX(0.9300);transform-origin:50% 0">X</span></div>
<div class="t" id="t74" style="left:21.60px;top:268.22px;font-size:12.5px;color:#555;width:22.60px;text-align:center;"><span style="transform:scaleX(0.9200);transform-origin:50% 0">1</span></div>
<div class="t" id="t75" style="left:21.60px;top:288.72px;font-size:12.5px;color:#555;width:22.60px;text-align:center;"><span style="transform:scaleX(0.9200);transform-origin:50% 0">2</span></div>
<div class="t" id="t76" style="left:21.60px;top:309.32px;font-size:12.5px;color:#555;width:22.60px;text-align:center;"><span style="transform:scaleX(0.9200);transform-origin:50% 0">3</span></div>
<div class="t" id="t77" style="left:21.60px;top:329.82px;font-size:12.5px;color:#555;width:22.60px;text-align:center;"><span style="transform:scaleX(0.9200);transform-origin:50% 0">4</span></div>
<div class="r" style="left:21.00px;top:348.50px;width:22.30px;height:21.75px;background:#e1e1e1;"></div>
<div class="r" style="left:43.10px;top:349.30px;width:1.80px;height:21.25px;background:#217346;"></div>
<div class="t" id="t78" style="left:21.20px;top:355.07px;font-size:12.5px;color:#217346;font-weight:bold;width:22.60px;text-align:center;"><span style="transform:scaleX(0.9200);transform-origin:50% 0">5</span></div>
<div class="t" id="t79" style="left:21.60px;top:376.92px;font-size:12.5px;color:#555;width:22.60px;text-align:center;"><span style="transform:scaleX(0.9200);transform-origin:50% 0">6</span></div>
<div class="t" id="t80" style="left:21.60px;top:397.47px;font-size:12.5px;color:#555;width:22.60px;text-align:center;"><span style="transform:scaleX(0.9200);transform-origin:50% 0">7</span></div>
<div class="t" id="t81" style="left:21.60px;top:418.02px;font-size:12.5px;color:#555;width:22.60px;text-align:center;"><span style="transform:scaleX(0.9200);transform-origin:50% 0">8</span></div>
<div class="t" id="t82" style="left:21.60px;top:438.57px;font-size:12.5px;color:#555;width:22.60px;text-align:center;"><span style="transform:scaleX(0.9200);transform-origin:50% 0">9</span></div>
<div class="t" id="t83" style="left:21.60px;top:459.12px;font-size:12.5px;color:#555;width:22.60px;text-align:center;"><span style="transform:scaleX(0.9200);transform-origin:50% 0">10</span></div>
<div class="t" id="t84" style="left:21.60px;top:479.67px;font-size:12.5px;color:#555;width:22.60px;text-align:center;"><span style="transform:scaleX(0.9200);transform-origin:50% 0">11</span></div>
<div class="t" id="t85" style="left:21.60px;top:500.22px;font-size:12.5px;color:#555;width:22.60px;text-align:center;"><span style="transform:scaleX(0.9200);transform-origin:50% 0">12</span></div>
<div class="t" id="t86" style="left:21.60px;top:520.77px;font-size:12.5px;color:#555;width:22.60px;text-align:center;"><span style="transform:scaleX(0.9200);transform-origin:50% 0">13</span></div>
<div class="t" id="t87" style="left:21.60px;top:541.32px;font-size:12.5px;color:#555;width:22.60px;text-align:center;"><span style="transform:scaleX(0.9200);transform-origin:50% 0">14</span></div>
<div class="t" id="t88" style="left:21.60px;top:561.87px;font-size:12.5px;color:#555;width:22.60px;text-align:center;"><span style="transform:scaleX(0.9200);transform-origin:50% 0">15</span></div>
<div class="t" id="t89" style="left:21.60px;top:582.42px;font-size:12.5px;color:#555;width:22.60px;text-align:center;"><span style="transform:scaleX(0.9200);transform-origin:50% 0">16</span></div>
<div class="t" id="t90" style="left:21.60px;top:602.97px;font-size:12.5px;color:#555;width:22.60px;text-align:center;"><span style="transform:scaleX(0.9200);transform-origin:50% 0">17</span></div>
<div class="t" id="t91" style="left:21.60px;top:623.52px;font-size:12.5px;color:#555;width:22.60px;text-align:center;"><span style="transform:scaleX(0.9200);transform-origin:50% 0">18</span></div>
<div class="t" id="t92" style="left:21.60px;top:644.07px;font-size:12.5px;color:#555;width:22.60px;text-align:center;"><span style="transform:scaleX(0.9200);transform-origin:50% 0">19</span></div>
<div class="t" id="t93" style="left:21.60px;top:664.62px;font-size:12.5px;color:#555;width:22.60px;text-align:center;"><span style="transform:scaleX(0.9200);transform-origin:50% 0">20</span></div>
<div class="t" id="t94" style="left:21.60px;top:685.17px;font-size:12.5px;color:#555;width:22.60px;text-align:center;"><span style="transform:scaleX(0.9200);transform-origin:50% 0">21</span></div>
<div class="t" id="t95" style="left:21.60px;top:704.12px;font-size:12.5px;color:#555;width:22.60px;text-align:center;"><span style="transform:scaleX(0.9200);transform-origin:50% 0">22</span></div>
<div class="r" style="left:44.50px;top:256.80px;width:73.50px;height:25.60px;background-color:#3a78ec;background-image:linear-gradient(90deg,#f2f200 0 0.95px,transparent 0.95px),linear-gradient(180deg,#f2f200 0 1.2px,transparent 1.2px);background-size:3.67px 4.13px;background-position:-0.65px 0px;"></div>
<div class="r" style="left:118.00px;top:256.80px;width:48.00px;height:25.10px;background:#f79646;"></div>
<div class="r" style="left:166.00px;top:256.80px;width:52.00px;height:25.10px;background:#558ed5;"></div>
<div class="r" style="left:218.00px;top:256.80px;width:154.00px;height:25.10px;background:#f79646;"></div>
<div class="r" style="left:376.00px;top:256.80px;width:891.00px;height:25.10px;background:#f79646;"></div>
<div class="r" style="left:257.00px;top:370.30px;width:114.50px;height:20.40px;background:#ffff00;"></div>
<div class="t" id="t96" style="left:120.70px;top:263.40px;font-size:13px;color:#fff;"><span style="transform:scaleX(0.9565);transform-origin:0 0">ancona</span></div>
<div class="t" id="t97" style="left:168.10px;top:263.40px;font-size:13px;color:#fff;"><span>bologna</span></div>
<div class="t" id="t98" style="left:220.20px;top:263.40px;font-size:13px;color:#fff;"><span style="transform:scaleX(1.0064);transform-origin:0 0">como</span></div>
<div class="t" id="t99" style="left:376.80px;top:263.40px;font-size:13px;color:#fff;"><span style="transform:scaleX(1.0915);transform-origin:0 0">empoli</span></div>
<div class="t" id="t100" style="left:424.00px;top:263.40px;font-size:13px;color:#fff;"><span style="transform:scaleX(1.0530);transform-origin:0 0">firenze</span></div>
<div class="t" id="t101" style="left:471.20px;top:263.40px;font-size:13px;color:#fff;"><span style="transform:scaleX(0.9963);transform-origin:0 0">genova</span></div>
<div class="t" id="t102" style="left:519.60px;top:263.40px;font-size:13px;color:#fff;"><span style="transform:scaleX(1.1063);transform-origin:0 0">hotel</span></div>
<div class="t" id="t103" style="left:556.90px;top:263.40px;font-size:13px;color:#fff;"><span style="transform:scaleX(1.0490);transform-origin:0 0">imola</span></div>
<div class="t" id="t104" style="left:595.90px;top:263.40px;font-size:13px;color:#fff;"><span style="transform:scaleX(0.9945);transform-origin:0 0">i lunga</span></div>
<div class="t" id="t105" style="left:640.20px;top:263.40px;font-size:13px;color:#fff;"><span style="transform:scaleX(0.9756);transform-origin:0 0">kursaal</span></div>
<div class="t" id="t106" style="left:688.00px;top:263.40px;font-size:13px;color:#fff;"><span style="transform:scaleX(1.0601);transform-origin:0 0">livorno</span></div>
<div class="t" id="t107" style="left:734.50px;top:263.40px;font-size:13px;color:#fff;"><span style="transform:scaleX(1.0601);transform-origin:0 0">milano</span></div>
<div class="t" id="t108" style="left:781.20px;top:263.40px;font-size:13px;color:#fff;"><span style="transform:scaleX(1.0403);transform-origin:0 0">napoli</span></div>
<div class="t" id="t109" style="left:823.90px;top:263.40px;font-size:13px;color:#fff;"><span style="transform:scaleX(1.0523);transform-origin:0 0">otranto</span></div>
<div class="t" id="t110" style="left:873.10px;top:263.40px;font-size:13px;color:#fff;"><span style="transform:scaleX(0.9799);transform-origin:0 0">padova</span></div>
<div class="t" id="t111" style="left:921.60px;top:263.40px;font-size:13px;color:#fff;"><span style="transform:scaleX(1.0115);transform-origin:0 0">quarto</span></div>
<div class="t" id="t112" style="left:965.60px;top:263.40px;font-size:13px;color:#fff;"><span>roma</span></div>
<div class="t" id="t113" style="left:1001.60px;top:263.40px;font-size:13px;color:#fff;"><span style="transform:scaleX(0.9589);transform-origin:0 0">savona</span></div>
<div class="t" id="t114" style="left:1048.30px;top:263.40px;font-size:13px;color:#fff;"><span style="transform:scaleX(1.0851);transform-origin:0 0">torino</span></div>
<div class="t" id="t115" style="left:1090.20px;top:263.40px;font-size:13px;color:#fff;"><span style="transform:scaleX(1.0279);transform-origin:0 0">udine</span></div>
<div class="t" id="t116" style="left:1129.50px;top:263.40px;font-size:13px;color:#fff;"><span style="transform:scaleX(1.0064);transform-origin:0 0">venezia</span></div>
<div class="t" id="t117" style="left:1180.70px;top:263.40px;font-size:13px;color:#fff;"><span style="transform:scaleX(1.0109);transform-origin:0 0">washington</span></div>
<div class="t" id="t118" style="left:1253.80px;top:263.40px;font-size:13px;color:#fff;"><span style="transform:scaleX(0.9314);transform-origin:0 0">ics</span></div>
<div class="t" id="t119" style="left:260.70px;top:261.30px;font-size:15px;color:#4b8ce0;font-weight:bold;font-style:italic;-webkit-text-stroke:0.7px #4b8ce0;"><span style="transform:scaleX(1.0286);transform-origin:0 0">domodossola</span></div>
<div class="t" id="t120" style="left:46.50px;top:286.90px;font-size:13px;color:#222;-webkit-text-stroke:0.2px #222;"><span style="transform:scaleX(1.0054);transform-origin:0 0">Monday</span></div>
<div class="t" id="t121" style="left:46.50px;top:307.50px;font-size:13px;color:#222;-webkit-text-stroke:0.2px #222;"><span style="transform:scaleX(0.9658);transform-origin:0 0">Tuesday</span></div>
<div class="t" id="t122" style="left:46.50px;top:328.00px;font-size:13px;color:#222;font-weight:bold;-webkit-text-stroke:0.2px #222;"><span style="transform:scaleX(0.9637);transform-origin:0 0">Wednesday</span></div>
<div class="t" id="t123" style="left:46.50px;top:354.75px;font-size:13px;color:#222;-webkit-text-stroke:0.2px #222;"><span style="transform:scaleX(0.9612);transform-origin:0 0">Thursday</span></div>
<div class="t" id="t124" style="left:44.00px;top:375.30px;font-size:13px;color:#222;font-style:italic;width:72.20px;text-align:right;-webkit-text-stroke:0.2px #222;"><span style="transform:scaleX(0.9772);transform-origin:100% 0">Friday</span></div>
<div class="t" id="t125" style="left:46.50px;top:395.85px;font-size:13px;color:#222;-webkit-text-stroke:0.2px #222;"><span style="transform:scaleX(0.9607);transform-origin:0 0">Saturday</span></div>
<div class="t" id="t126" style="left:46.50px;top:416.40px;font-size:13px;color:#222;-webkit-text-stroke:0.2px #222;"><span style="transform:scaleX(0.9457);transform-origin:0 0">Sunday</span></div>
<div class="t" id="t127" style="left:118.00px;top:286.90px;font-size:13px;color:#222;width:46.20px;text-align:right;-webkit-text-stroke:0.2px #222;"><span style="transform:scaleX(0.9400);transform-origin:100% 0">13:10</span></div>
<div class="t" id="t128" style="left:118.00px;top:307.50px;font-size:13px;color:#222;width:46.20px;text-align:right;-webkit-text-stroke:0.2px #222;"><span style="transform:scaleX(0.9400);transform-origin:100% 0">14:10</span></div>
<div class="t" id="t129" style="left:118.00px;top:328.00px;font-size:13px;color:#222;width:46.20px;text-align:right;-webkit-text-stroke:0.2px #222;"><span style="transform:scaleX(0.9400);transform-origin:100% 0">15:10</span></div>
<div class="t" id="t130" style="left:118.00px;top:354.75px;font-size:13px;color:#222;width:46.20px;text-align:right;-webkit-text-stroke:0.2px #222;"><span style="transform:scaleX(0.9400);transform-origin:100% 0">16:10</span></div>
<div class="t" id="t131" style="left:118.00px;top:375.30px;font-size:13px;color:#222;width:46.20px;text-align:right;-webkit-text-stroke:0.2px #222;"><span style="transform:scaleX(0.9400);transform-origin:100% 0">17:10</span></div>
<div class="t" id="t132" style="left:118.00px;top:395.85px;font-size:13px;color:#222;width:46.20px;text-align:right;-webkit-text-stroke:0.2px #222;"><span style="transform:scaleX(0.9400);transform-origin:100% 0">18:10</span></div>
<div class="t" id="t133" style="left:118.00px;top:416.40px;font-size:13px;color:#222;width:46.20px;text-align:right;-webkit-text-stroke:0.2px #222;"><span style="transform:scaleX(0.9400);transform-origin:100% 0">19:10</span></div>
<div class="t" id="t134" style="left:166.00px;top:286.90px;font-size:13px;color:#222;width:50.20px;text-align:right;-webkit-text-stroke:0.2px #222;"><span style="transform:scaleX(0.9400);transform-origin:100% 0">14:10</span></div>
<div class="t" id="t135" style="left:166.00px;top:307.50px;font-size:13px;color:#222;width:50.20px;text-align:right;-webkit-text-stroke:0.2px #222;"><span style="transform:scaleX(0.9400);transform-origin:100% 0">15:10</span></div>
<div class="t" id="t136" style="left:166.00px;top:328.00px;font-size:13px;color:#222;width:50.20px;text-align:right;-webkit-text-stroke:0.2px #222;"><span style="transform:scaleX(0.9400);transform-origin:100% 0">16:10</span></div>
<div class="t" id="t137" style="left:166.00px;top:354.75px;font-size:13px;color:#222;width:50.20px;text-align:right;-webkit-text-stroke:0.2px #222;"><span style="transform:scaleX(0.9400);transform-origin:100% 0">17:10</span></div>
<div class="t" id="t138" style="left:166.00px;top:375.30px;font-size:13px;color:#222;width:50.20px;text-align:right;-webkit-text-stroke:0.2px #222;"><span style="transform:scaleX(0.9400);transform-origin:100% 0">18:10</span></div>
<div class="t" id="t139" style="left:166.00px;top:395.85px;font-size:13px;color:#222;width:50.20px;text-align:right;-webkit-text-stroke:0.2px #222;"><span style="transform:scaleX(0.9400);transform-origin:100% 0">19:10</span></div>
<div class="t" id="t140" style="left:166.00px;top:416.40px;font-size:13px;color:#222;width:50.20px;text-align:right;-webkit-text-stroke:0.2px #222;"><span style="transform:scaleX(0.9400);transform-origin:100% 0">20:10</span></div>
<div class="t" id="t141" style="left:218.00px;top:286.90px;font-size:13px;color:#222;width:37.20px;text-align:right;-webkit-text-stroke:0.2px #222;"><span style="transform:scaleX(0.9400);transform-origin:100% 0">15:10</span></div>
<div class="t" id="t142" style="left:218.00px;top:307.50px;font-size:13px;color:#222;width:37.20px;text-align:right;-webkit-text-stroke:0.2px #222;"><span style="transform:scaleX(0.9400);transform-origin:100% 0">16:10</span></div>
<div class="t" id="t143" style="left:218.00px;top:328.00px;font-size:13px;color:#222;width:37.20px;text-align:right;-webkit-text-stroke:0.2px #222;"><span style="transform:scaleX(0.9400);transform-origin:100% 0">17:10</span></div>
<div class="t" id="t144" style="left:218.00px;top:354.75px;font-size:13px;color:#222;width:37.20px;text-align:right;-webkit-text-stroke:0.2px #222;"><span style="transform:scaleX(0.9400);transform-origin:100% 0">18:10</span></div>
<div class="t" id="t145" style="left:218.00px;top:375.30px;font-size:13px;color:#222;width:37.20px;text-align:right;-webkit-text-stroke:0.2px #222;"><span style="transform:scaleX(0.9400);transform-origin:100% 0">19:10</span></div>
<div class="t" id="t146" style="left:218.00px;top:395.85px;font-size:13px;color:#222;width:37.20px;text-align:right;-webkit-text-stroke:0.2px #222;"><span style="transform:scaleX(0.9400);transform-origin:100% 0">20:10</span></div>
<div class="t" id="t147" style="left:218.00px;top:416.40px;font-size:13px;color:#222;width:37.20px;text-align:right;-webkit-text-stroke:0.2px #222;"><span style="transform:scaleX(0.9400);transform-origin:100% 0">21:10</span></div>
<div class="t" id="t148" style="left:259.50px;top:286.90px;font-size:13px;color:#222;-webkit-text-stroke:0.2px #222;"><span style="transform:scaleX(0.9400);transform-origin:0 0">16:10</span></div>
<div class="t" id="t149" style="left:257.00px;top:307.50px;font-size:13px;color:#222;width:115.00px;text-align:center;-webkit-text-stroke:0.2px #222;"><span style="transform:scaleX(0.9400);transform-origin:50% 0">17:10</span></div>
<div class="t" id="t150" style="left:257.00px;top:328.00px;font-size:13px;color:#222;width:113.20px;text-align:right;-webkit-text-stroke:0.2px #222;"><span style="transform:scaleX(0.9400);transform-origin:100% 0">18:10</span></div>
<div class="t" id="t151" style="left:257.00px;top:354.75px;font-size:13px;color:#222;width:115.00px;text-align:center;-webkit-text-stroke:0.2px #222;"><span style="transform:scaleX(0.9400);transform-origin:50% 0">19:10</span></div>
<div class="t" id="t152" style="left:259.50px;top:375.30px;font-size:13px;color:#222;-webkit-text-stroke:0.2px #222;"><span style="transform:scaleX(0.9400);transform-origin:0 0">20:10</span></div>
<div class="t" id="t153" style="left:257.00px;top:395.85px;font-size:13px;color:#222;width:115.00px;text-align:center;-webkit-text-stroke:0.2px #222;"><span style="transform:scaleX(0.9400);transform-origin:50% 0">21:10</span></div>
<div class="t" id="t154" style="left:257.00px;top:416.40px;font-size:13px;color:#222;width:113.20px;text-align:right;-webkit-text-stroke:0.2px #222;"><span style="transform:scaleX(0.9400);transform-origin:100% 0">22:10</span></div>
<div class="t" id="t155" style="left:376.00px;top:286.90px;font-size:13px;color:#222;width:45.20px;text-align:right;-webkit-text-stroke:0.2px #222;"><span style="transform:scaleX(0.9400);transform-origin:100% 0">17:10</span></div>
<div class="t" id="t156" style="left:376.00px;top:307.50px;font-size:13px;color:#222;width:45.20px;text-align:right;-webkit-text-stroke:0.2px #222;"><span style="transform:scaleX(0.9400);transform-origin:100% 0">18:10</span></div>
<div class="t" id="t157" style="left:376.00px;top:328.00px;font-size:13px;color:#222;width:45.20px;text-align:right;-webkit-text-stroke:0.2px #222;"><span style="transform:scaleX(0.9400);transform-origin:100% 0">19:10</span></div>
<div class="t" id="t158" style="left:376.00px;top:354.75px;font-size:13px;color:#222;width:45.20px;text-align:right;-webkit-text-stroke:0.2px #222;"><span style="transform:scaleX(0.9400);transform-origin:100% 0">20:10</span></div>
<div class="t" id="t159" style="left:376.00px;top:375.30px;font-size:13px;color:#222;width:45.20px;text-align:right;-webkit-text-stroke:0.2px #222;"><span style="transform:scaleX(0.9400);transform-origin:100% 0">21:10</span></div>
<div class="t" id="t160" style="left:376.00px;top:395.85px;font-size:13px;color:#222;width:45.20px;text-align:right;-webkit-text-stroke:0.2px #222;"><span style="transform:scaleX(0.9400);transform-origin:100% 0">22:10</span></div>
<div class="t" id="t161" style="left:376.00px;top:416.40px;font-size:13px;color:#222;width:45.20px;text-align:right;-webkit-text-stroke:0.2px #222;"><span style="transform:scaleX(0.9400);transform-origin:100% 0">23:10</span></div>
<div class="t" id="t162" style="left:423.00px;top:286.90px;font-size:13px;color:#222;width:45.20px;text-align:right;-webkit-text-stroke:0.2px #222;"><span style="transform:scaleX(0.9400);transform-origin:100% 0">18:10</span></div>
<div class="t" id="t163" style="left:423.00px;top:307.50px;font-size:13px;color:#222;width:45.20px;text-align:right;-webkit-text-stroke:0.2px #222;"><span style="transform:scaleX(0.9400);transform-origin:100% 0">19:10</span></div>
<div class="t" id="t164" style="left:423.00px;top:328.00px;font-size:13px;color:#222;width:45.20px;text-align:right;-webkit-text-stroke:0.2px #222;"><span style="transform:scaleX(0.9400);transform-origin:100% 0">20:10</span></div>
<div class="t" id="t165" style="left:423.00px;top:354.75px;font-size:13px;color:#222;width:45.20px;text-align:right;-webkit-text-stroke:0.2px #222;"><span style="transform:scaleX(0.9400);transform-origin:100% 0">21:10</span></div>
<div class="t" id="t166" style="left:423.00px;top:375.30px;font-size:13px;color:#222;width:45.20px;text-align:right;-webkit-text-stroke:0.2px #222;"><span style="transform:scaleX(0.9400);transform-origin:100% 0">22:10</span></div>
<div class="t" id="t167" style="left:423.00px;top:395.85px;font-size:13px;color:#222;width:45.20px;text-align:right;-webkit-text-stroke:0.2px #222;"><span style="transform:scaleX(0.9400);transform-origin:100% 0">23:10</span></div>
<div class="t" id="t168" style="left:423.00px;top:416.40px;font-size:13px;color:#222;width:45.20px;text-align:right;-webkit-text-stroke:0.2px #222;"><span style="transform:scaleX(0.9400);transform-origin:100% 0">0:10</span></div>
<div class="t" id="t169" style="left:470.00px;top:286.90px;font-size:13px;color:#222;width:46.20px;text-align:right;-webkit-text-stroke:0.2px #222;"><span style="transform:scaleX(0.9400);transform-origin:100% 0">19:10</span></div>
<div class="t" id="t170" style="left:470.00px;top:307.50px;font-size:13px;color:#222;width:46.20px;text-align:right;-webkit-text-stroke:0.2px #222;"><span style="transform:scaleX(0.9400);transform-origin:100% 0">20:10</span></div>
<div class="t" id="t171" style="left:470.00px;top:328.00px;font-size:13px;color:#222;width:46.20px;text-align:right;-webkit-text-stroke:0.2px #222;"><span style="transform:scaleX(0.9400);transform-origin:100% 0">21:10</span></div>
<div class="t" id="t172" style="left:470.00px;top:354.75px;font-size:13px;color:#222;width:46.20px;text-align:right;-webkit-text-stroke:0.2px #222;"><span style="transform:scaleX(0.9400);transform-origin:100% 0">22:10</span></div>
<div class="t" id="t173" style="left:470.00px;top:375.30px;font-size:13px;color:#222;width:46.20px;text-align:right;-webkit-text-stroke:0.2px #222;"><span style="transform:scaleX(0.9400);transform-origin:100% 0">23:10</span></div>
<div class="t" id="t174" style="left:470.00px;top:395.85px;font-size:13px;color:#222;width:46.20px;text-align:right;-webkit-text-stroke:0.2px #222;"><span style="transform:scaleX(0.9400);transform-origin:100% 0">0:10</span></div>
<div class="t" id="t175" style="left:470.00px;top:416.40px;font-size:13px;color:#222;width:46.20px;text-align:right;-webkit-text-stroke:0.2px #222;"><span style="transform:scaleX(0.9400);transform-origin:100% 0">1:10</span></div>
<div class="t" id="t176" style="left:518.00px;top:286.90px;font-size:13px;color:#222;width:35.20px;text-align:right;-webkit-text-stroke:0.2px #222;"><span style="transform:scaleX(0.9400);transform-origin:100% 0">20:10</span></div>
<div class="t" id="t177" style="left:518.00px;top:307.50px;font-size:13px;color:#222;width:35.20px;text-align:right;-webkit-text-stroke:0.2px #222;"><span style="transform:scaleX(0.9400);transform-origin:100% 0">21:10</span></div>
<div class="t" id="t178" style="left:518.00px;top:328.00px;font-size:13px;color:#222;width:35.20px;text-align:right;-webkit-text-stroke:0.2px #222;"><span style="transform:scaleX(0.9400);transform-origin:100% 0">22:10</span></div>
<div class="t" id="t179" style="left:518.00px;top:354.75px;font-size:13px;color:#222;width:35.20px;text-align:right;-webkit-text-stroke:0.2px #222;"><span style="transform:scaleX(0.9400);transform-origin:100% 0">23:10</span></div>
<div class="t" id="t180" style="left:518.00px;top:375.30px;font-size:13px;color:#222;width:35.20px;text-align:right;-webkit-text-stroke:0.2px #222;"><span style="transform:scaleX(0.9400);transform-origin:100% 0">0:10</span></div>
<div class="t" id="t181" style="left:518.00px;top:395.85px;font-size:13px;color:#222;width:35.20px;text-align:right;-webkit-text-stroke:0.2px #222;"><span style="transform:scaleX(0.9400);transform-origin:100% 0">1:10</span></div>
<div class="t" id="t182" style="left:518.00px;top:416.40px;font-size:13px;color:#222;width:35.20px;text-align:right;-webkit-text-stroke:0.2px #222;"><span style="transform:scaleX(0.9400);transform-origin:100% 0">2:10</span></div>
<div class="t" id="t183" style="left:555.00px;top:286.90px;font-size:13px;color:#222;width:37.20px;text-align:right;-webkit-text-stroke:0.2px #222;"><span style="transform:scaleX(0.9400);transform-origin:100% 0">21:10</span></div>
<div class="t" id="t184" style="left:555.00px;top:307.50px;font-size:13px;color:#222;width:37.20px;text-align:right;-webkit-text-stroke:0.2px #222;"><span style="transform:scaleX(0.9400);transform-origin:100% 0">22:10</span></div>
<div class="t" id="t185" style="left:555.00px;top:328.00px;font-size:13px;color:#222;width:37.20px;text-align:right;-webkit-text-stroke:0.2px #222;"><span style="transform:scaleX(0.9400);transform-origin:100% 0">23:10</span></div>
<div class="t" id="t186" style="left:555.00px;top:354.75px;font-size:13px;color:#222;width:37.20px;text-align:right;-webkit-text-stroke:0.2px #222;"><span style="transform:scaleX(0.9400);transform-origin:100% 0">0:10</span></div>
<div class="t" id="t187" style="left:555.00px;top:375.30px;font-size:13px;color:#222;width:37.20px;text-align:right;-webkit-text-stroke:0.2px #222;"><span style="transform:scaleX(0.9400);transform-origin:100% 0">1:10</span></div>
<div class="t" id="t188" style="left:555.00px;top:395.85px;font-size:13px;color:#222;width:37.20px;text-align:right;-webkit-text-stroke:0.2px #222;"><span style="transform:scaleX(0.9400);transform-origin:100% 0">2:10</span></div>
<div class="t" id="t189" style="left:555.00px;top:416.40px;font-size:13px;color:#222;width:37.20px;text-align:right;-webkit-text-stroke:0.2px #222;"><span style="transform:scaleX(0.9400);transform-origin:100% 0">3:10</span></div>
<div class="t" id="t190" style="left:594.00px;top:286.90px;font-size:13px;color:#222;width:42.80px;text-align:right;-webkit-text-stroke:0.2px #222;"><span style="transform:scaleX(0.9400);transform-origin:100% 0">22:10</span></div>
<div class="t" id="t191" style="left:594.00px;top:307.50px;font-size:13px;color:#222;width:42.80px;text-align:right;-webkit-text-stroke:0.2px #222;"><span style="transform:scaleX(0.9400);transform-origin:100% 0">23:10</span></div>
<div class="t" id="t192" style="left:594.00px;top:328.00px;font-size:13px;color:#222;width:42.80px;text-align:right;-webkit-text-stroke:0.2px #222;"><span style="transform:scaleX(0.9400);transform-origin:100% 0">0:10</span></div>
<div class="t" id="t193" style="left:594.00px;top:354.75px;font-size:13px;color:#222;width:42.80px;text-align:right;-webkit-text-stroke:0.2px #222;"><span style="transform:scaleX(0.9400);transform-origin:100% 0">1:10</span></div>
<div class="t" id="t194" style="left:594.00px;top:375.30px;font-size:13px;color:#222;width:42.80px;text-align:right;-webkit-text-stroke:0.2px #222;"><span style="transform:scaleX(0.9400);transform-origin:100% 0">2:10</span></div>
<div class="t" id="t195" style="left:594.00px;top:395.85px;font-size:13px;color:#222;width:42.80px;text-align:right;-webkit-text-stroke:0.2px #222;"><span style="transform:scaleX(0.9400);transform-origin:100% 0">3:10</span></div>
<div class="t" id="t196" style="left:594.00px;top:416.40px;font-size:13px;color:#222;width:42.80px;text-align:right;-webkit-text-stroke:0.2px #222;"><span style="transform:scaleX(0.9400);transform-origin:100% 0">4:10</span></div>
<div class="t" id="t197" style="left:638.60px;top:286.90px;font-size:13px;color:#222;width:45.20px;text-align:right;-webkit-text-stroke:0.2px #222;"><span style="transform:scaleX(0.9400);transform-origin:100% 0">23:10</span></div>
<div class="t" id="t198" style="left:638.60px;top:307.50px;font-size:13px;color:#222;width:45.20px;text-align:right;-webkit-text-stroke:0.2px #222;"><span style="transform:scaleX(0.9400);transform-origin:100% 0">0:10</span></div>
<div class="t" id="t199" style="left:638.60px;top:328.00px;font-size:13px;color:#222;width:45.20px;text-align:right;-webkit-text-stroke:0.2px #222;"><span style="transform:scaleX(0.9400);transform-origin:100% 0">1:10</span></div>
<div class="t" id="t200" style="left:638.60px;top:354.75px;font-size:13px;color:#222;width:45.20px;text-align:right;-webkit-text-stroke:0.2px #222;"><span style="transform:scaleX(0.9400);transform-origin:100% 0">2:10</span></div>
<div class="t" id="t201" style="left:638.60px;top:375.30px;font-size:13px;color:#222;width:45.20px;text-align:right;-webkit-text-stroke:0.2px #222;"><span style="transform:scaleX(0.9400);transform-origin:100% 0">3:10</span></div>
<div class="t" id="t202" style="left:638.60px;top:395.85px;font-size:13px;color:#222;width:45.20px;text-align:right;-webkit-text-stroke:0.2px #222;"><span style="transform:scaleX(0.9400);transform-origin:100% 0">4:10</span></div>
<div class="t" id="t203" style="left:638.60px;top:416.40px;font-size:13px;color:#222;width:45.20px;text-align:right;-webkit-text-stroke:0.2px #222;"><span style="transform:scaleX(0.9400);transform-origin:100% 0">5:10</span></div>
<div class="t" id="t204" style="left:685.60px;top:286.90px;font-size:13px;color:#222;width:45.90px;text-align:right;-webkit-text-stroke:0.2px #222;"><span style="transform:scaleX(0.9400);transform-origin:100% 0">0:10</span></div>
<div class="t" id="t205" style="left:685.60px;top:307.50px;font-size:13px;color:#222;width:45.90px;text-align:right;-webkit-text-stroke:0.2px #222;"><span style="transform:scaleX(0.9400);transform-origin:100% 0">1:10</span></div>
<div class="t" id="t206" style="left:685.60px;top:328.00px;font-size:13px;color:#222;width:45.90px;text-align:right;-webkit-text-stroke:0.2px #222;"><span style="transform:scaleX(0.9400);transform-origin:100% 0">2:10</span></div>
<div class="t" id="t207" style="left:685.60px;top:354.75px;font-size:13px;color:#222;width:45.90px;text-align:right;-webkit-text-stroke:0.2px #222;"><span style="transform:scaleX(0.9400);transform-origin:100% 0">3:10</span></div>
<div class="t" id="t208" style="left:685.60px;top:375.30px;font-size:13px;color:#222;width:45.90px;text-align:right;-webkit-text-stroke:0.2px #222;"><span style="transform:scaleX(0.9400);transform-origin:100% 0">4:10</span></div>
<div class="t" id="t209" style="left:685.60px;top:395.85px;font-size:13px;color:#222;width:45.90px;text-align:right;-webkit-text-stroke:0.2px #222;"><span style="transform:scaleX(0.9400);transform-origin:100% 0">5:10</span></div>
<div class="t" id="t210" style="left:685.60px;top:416.40px;font-size:13px;color:#222;width:45.90px;text-align:right;-webkit-text-stroke:0.2px #222;"><span style="transform:scaleX(0.9400);transform-origin:100% 0">6:10</span></div>
<div class="t" id="t211" style="left:733.30px;top:286.90px;font-size:13px;color:#222;width:44.20px;text-align:right;-webkit-text-stroke:0.2px #222;"><span style="transform:scaleX(0.9400);transform-origin:100% 0">1:10</span></div>
<div class="t" id="t212" style="left:733.30px;top:307.50px;font-size:13px;color:#222;width:44.20px;text-align:right;-webkit-text-stroke:0.2px #222;"><span style="transform:scaleX(0.9400);transform-origin:100% 0">2:10</span></div>
<div class="t" id="t213" style="left:733.30px;top:328.00px;font-size:13px;color:#222;width:44.20px;text-align:right;-webkit-text-stroke:0.2px #222;"><span style="transform:scaleX(0.9400);transform-origin:100% 0">3:10</span></div>
<div class="t" id="t214" style="left:733.30px;top:354.75px;font-size:13px;color:#222;width:44.20px;text-align:right;-webkit-text-stroke:0.2px #222;"><span style="transform:scaleX(0.9400);transform-origin:100% 0">4:10</span></div>
<div class="t" id="t215" style="left:733.30px;top:375.30px;font-size:13px;color:#222;width:44.20px;text-align:right;-webkit-text-stroke:0.2px #222;"><span style="transform:scaleX(0.9400);transform-origin:100% 0">5:10</span></div>
<div class="t" id="t216" style="left:733.30px;top:395.85px;font-size:13px;color:#222;width:44.20px;text-align:right;-webkit-text-stroke:0.2px #222;"><span style="transform:scaleX(0.9400);transform-origin:100% 0">6:10</span></div>
<div class="t" id="t217" style="left:733.30px;top:416.40px;font-size:13px;color:#222;width:44.20px;text-align:right;-webkit-text-stroke:0.2px #222;"><span style="transform:scaleX(0.9400);transform-origin:100% 0">7:10</span></div>
<div class="t" id="t218" style="left:779.30px;top:286.90px;font-size:13px;color:#222;width:41.50px;text-align:right;-webkit-text-stroke:0.2px #222;"><span style="transform:scaleX(0.9400);transform-origin:100% 0">2:10</span></div>
<div class="t" id="t219" style="left:779.30px;top:307.50px;font-size:13px;color:#222;width:41.50px;text-align:right;-webkit-text-stroke:0.2px #222;"><span style="transform:scaleX(0.9400);transform-origin:100% 0">3:10</span></div>
<div class="t" id="t220" style="left:779.30px;top:328.00px;font-size:13px;color:#222;width:41.50px;text-align:right;-webkit-text-stroke:0.2px #222;"><span style="transform:scaleX(0.9400);transform-origin:100% 0">4:10</span></div>
<div class="t" id="t221" style="left:779.30px;top:354.75px;font-size:13px;color:#222;width:41.50px;text-align:right;-webkit-text-stroke:0.2px #222;"><span style="transform:scaleX(0.9400);transform-origin:100% 0">5:10</span></div>
<div class="t" id="t222" style="left:779.30px;top:375.30px;font-size:13px;color:#222;width:41.50px;text-align:right;-webkit-text-stroke:0.2px #222;"><span style="transform:scaleX(0.9400);transform-origin:100% 0">6:10</span></div>
<div class="t" id="t223" style="left:779.30px;top:395.85px;font-size:13px;color:#222;width:41.50px;text-align:right;-webkit-text-stroke:0.2px #222;"><span style="transform:scaleX(0.9400);transform-origin:100% 0">7:10</span></div>
<div class="t" id="t224" style="left:779.30px;top:416.40px;font-size:13px;color:#222;width:41.50px;text-align:right;-webkit-text-stroke:0.2px #222;"><span style="transform:scaleX(0.9400);transform-origin:100% 0">8:10</span></div>
<div class="t" id="t225" style="left:822.60px;top:286.90px;font-size:13px;color:#222;width:47.10px;text-align:right;-webkit-text-stroke:0.2px #222;"><span style="transform:scaleX(0.9400);transform-origin:100% 0">3:10</span></div>
<div class="t" id="t226" style="left:822.60px;top:307.50px;font-size:13px;color:#222;width:47.10px;text-align:right;-webkit-text-stroke:0.2px #222;"><span style="transform:scaleX(0.9400);transform-origin:100% 0">4:10</span></div>
<div class="t" id="t227" style="left:822.60px;top:328.00px;font-size:13px;color:#222;width:47.10px;text-align:right;-webkit-text-stroke:0.2px #222;"><span style="transform:scaleX(0.9400);transform-origin:100% 0">5:10</span></div>
<div class="t" id="t228" style="left:822.60px;top:354.75px;font-size:13px;color:#222;width:47.10px;text-align:right;-webkit-text-stroke:0.2px #222;"><span style="transform:scaleX(0.9400);transform-origin:100% 0">6:10</span></div>
<div class="t" id="t229" style="left:822.60px;top:375.30px;font-size:13px;color:#222;width:47.10px;text-align:right;-webkit-text-stroke:0.2px #222;"><span style="transform:scaleX(0.9400);transform-origin:100% 0">7:10</span></div>
<div class="t" id="t230" style="left:822.60px;top:395.85px;font-size:13px;color:#222;width:47.10px;text-align:right;-webkit-text-stroke:0.2px #222;"><span style="transform:scaleX(0.9400);transform-origin:100% 0">8:10</span></div>
<div class="t" id="t231" style="left:822.60px;top:416.40px;font-size:13px;color:#222;width:47.10px;text-align:right;-webkit-text-stroke:0.2px #222;"><span style="transform:scaleX(0.9400);transform-origin:100% 0">9:10</span></div>
<div class="t" id="t232" style="left:871.50px;top:286.90px;font-size:13px;color:#222;width:46.10px;text-align:right;-webkit-text-stroke:0.2px #222;"><span style="transform:scaleX(0.9400);transform-origin:100% 0">4:10</span></div>
<div class="t" id="t233" style="left:871.50px;top:307.50px;font-size:13px;color:#222;width:46.10px;text-align:right;-webkit-text-stroke:0.2px #222;"><span style="transform:scaleX(0.9400);transform-origin:100% 0">5:10</span></div>
<div class="t" id="t234" style="left:871.50px;top:328.00px;font-size:13px;color:#222;width:46.10px;text-align:right;-webkit-text-stroke:0.2px #222;"><span style="transform:scaleX(0.9400);transform-origin:100% 0">6:10</span></div>
<div class="t" id="t235" style="left:871.50px;top:354.75px;font-size:13px;color:#222;width:46.10px;text-align:right;-webkit-text-stroke:0.2px #222;"><span style="transform:scaleX(0.9400);transform-origin:100% 0">7:10</span></div>
<div class="t" id="t236" style="left:871.50px;top:375.30px;font-size:13px;color:#222;width:46.10px;text-align:right;-webkit-text-stroke:0.2px #222;"><span style="transform:scaleX(0.9400);transform-origin:100% 0">8:10</span></div>
<div class="t" id="t237" style="left:871.50px;top:395.85px;font-size:13px;color:#222;width:46.10px;text-align:right;-webkit-text-stroke:0.2px #222;"><span style="transform:scaleX(0.9400);transform-origin:100% 0">9:10</span></div>
<div class="t" id="t238" style="left:871.50px;top:416.40px;font-size:13px;color:#222;width:46.10px;text-align:right;-webkit-text-stroke:0.2px #222;"><span style="transform:scaleX(0.9400);transform-origin:100% 0">10:10</span></div>
<div class="t" id="t239" style="left:919.40px;top:286.90px;font-size:13px;color:#222;width:42.80px;text-align:right;-webkit-text-stroke:0.2px #222;"><span style="transform:scaleX(0.9400);transform-origin:100% 0">5:10</span></div>
<div class="t" id="t240" style="left:919.40px;top:307.50px;font-size:13px;color:#222;width:42.80px;text-align:right;-webkit-text-stroke:0.2px #222;"><span style="transform:scaleX(0.9400);transform-origin:100% 0">6:10</span></div>
<div class="t" id="t241" style="left:919.40px;top:328.00px;font-size:13px;color:#222;width:42.80px;text-align:right;-webkit-text-stroke:0.2px #222;"><span style="transform:scaleX(0.9400);transform-origin:100% 0">7:10</span></div>
<div class="t" id="t242" style="left:919.40px;top:354.75px;font-size:13px;color:#222;width:42.80px;text-align:right;-webkit-text-stroke:0.2px #222;"><span style="transform:scaleX(0.9400);transform-origin:100% 0">8:10</span></div>
<div class="t" id="t243" style="left:919.40px;top:375.30px;font-size:13px;color:#222;width:42.80px;text-align:right;-webkit-text-stroke:0.2px #222;"><span style="transform:scaleX(0.9400);transform-origin:100% 0">9:10</span></div>
<div class="t" id="t244" style="left:919.40px;top:395.85px;font-size:13px;color:#222;width:42.80px;text-align:right;-webkit-text-stroke:0.2px #222;"><span style="transform:scaleX(0.9400);transform-origin:100% 0">10:10</span></div>
<div class="t" id="t245" style="left:919.40px;top:416.40px;font-size:13px;color:#222;width:42.80px;text-align:right;-webkit-text-stroke:0.2px #222;"><span style="transform:scaleX(0.9400);transform-origin:100% 0">11:10</span></div>
<div class="t" id="t246" style="left:964.00px;top:286.90px;font-size:13px;color:#222;width:34.20px;text-align:right;-webkit-text-stroke:0.2px #222;"><span style="transform:scaleX(0.9400);transform-origin:100% 0">6:10</span></div>
<div class="t" id="t247" style="left:964.00px;top:307.50px;font-size:13px;color:#222;width:34.20px;text-align:right;-webkit-text-stroke:0.2px #222;"><span style="transform:scaleX(0.9400);transform-origin:100% 0">7:10</span></div>
<div class="t" id="t248" style="left:964.00px;top:328.00px;font-size:13px;color:#222;width:34.20px;text-align:right;-webkit-text-stroke:0.2px #222;"><span style="transform:scaleX(0.9400);transform-origin:100% 0">8:10</span></div>
<div class="t" id="t249" style="left:964.00px;top:354.75px;font-size:13px;color:#222;width:34.20px;text-align:right;-webkit-text-stroke:0.2px #222;"><span style="transform:scaleX(0.9400);transform-origin:100% 0">9:10</span></div>
<div class="t" id="t250" style="left:964.00px;top:375.30px;font-size:13px;color:#222;width:34.20px;text-align:right;-webkit-text-stroke:0.2px #222;"><span style="transform:scaleX(0.9400);transform-origin:100% 0">10:10</span></div>
<div class="t" id="t251" style="left:964.00px;top:395.85px;font-size:13px;color:#222;width:34.20px;text-align:right;-webkit-text-stroke:0.2px #222;"><span style="transform:scaleX(0.9400);transform-origin:100% 0">11:10</span></div>
<div class="t" id="t252" style="left:964.00px;top:416.40px;font-size:13px;color:#222;width:34.20px;text-align:right;-webkit-text-stroke:0.2px #222;"><span style="transform:scaleX(0.9400);transform-origin:100% 0">12:10</span></div>
<div class="t" id="t253" style="left:1000.00px;top:286.90px;font-size:13px;color:#222;width:44.70px;text-align:right;-webkit-text-stroke:0.2px #222;"><span style="transform:scaleX(0.9400);transform-origin:100% 0">7:10</span></div>
<div class="t" id="t254" style="left:1000.00px;top:307.50px;font-size:13px;color:#222;width:44.70px;text-align:right;-webkit-text-stroke:0.2px #222;"><span style="transform:scaleX(0.9400);transform-origin:100% 0">8:10</span></div>
<div class="t" id="t255" style="left:1000.00px;top:328.00px;font-size:13px;color:#222;width:44.70px;text-align:right;-webkit-text-stroke:0.2px #222;"><span style="transform:scaleX(0.9400);transform-origin:100% 0">9:10</span></div>
<div class="t" id="t256" style="left:1000.00px;top:354.75px;font-size:13px;color:#222;width:44.70px;text-align:right;-webkit-text-stroke:0.2px #222;"><span style="transform:scaleX(0.9400);transform-origin:100% 0">10:10</span></div>
<div class="t" id="t257" style="left:1000.00px;top:375.30px;font-size:13px;color:#222;width:44.70px;text-align:right;-webkit-text-stroke:0.2px #222;"><span style="transform:scaleX(0.9400);transform-origin:100% 0">11:10</span></div>
<div class="t" id="t258" style="left:1000.00px;top:395.85px;font-size:13px;color:#222;width:44.70px;text-align:right;-webkit-text-stroke:0.2px #222;"><span style="transform:scaleX(0.9400);transform-origin:100% 0">12:10</span></div>
<div class="t" id="t259" style="left:1000.00px;top:416.40px;font-size:13px;color:#222;width:44.70px;text-align:right;-webkit-text-stroke:0.2px #222;"><span style="transform:scaleX(0.9400);transform-origin:100% 0">13:10</span></div>
<div class="t" id="t260" style="left:1046.50px;top:286.90px;font-size:13px;color:#222;width:39.70px;text-align:right;-webkit-text-stroke:0.2px #222;"><span style="transform:scaleX(0.9400);transform-origin:100% 0">8:10</span></div>
<div class="t" id="t261" style="left:1046.50px;top:307.50px;font-size:13px;color:#222;width:39.70px;text-align:right;-webkit-text-stroke:0.2px #222;"><span style="transform:scaleX(0.9400);transform-origin:100% 0">9:10</span></div>
<div class="t" id="t262" style="left:1046.50px;top:328.00px;font-size:13px;color:#222;width:39.70px;text-align:right;-webkit-text-stroke:0.2px #222;"><span style="transform:scaleX(0.9400);transform-origin:100% 0">10:10</span></div>
<div class="t" id="t263" style="left:1046.50px;top:354.75px;font-size:13px;color:#222;width:39.70px;text-align:right;-webkit-text-stroke:0.2px #222;"><span style="transform:scaleX(0.9400);transform-origin:100% 0">11:10</span></div>
<div class="t" id="t264" style="left:1046.50px;top:375.30px;font-size:13px;color:#222;width:39.70px;text-align:right;-webkit-text-stroke:0.2px #222;"><span style="transform:scaleX(0.9400);transform-origin:100% 0">12:10</span></div>
<div class="t" id="t265" style="left:1046.50px;top:395.85px;font-size:13px;color:#222;width:39.70px;text-align:right;-webkit-text-stroke:0.2px #222;"><span style="transform:scaleX(0.9400);transform-origin:100% 0">13:10</span></div>
<div class="t" id="t266" style="left:1046.50px;top:416.40px;font-size:13px;color:#222;width:39.70px;text-align:right;-webkit-text-stroke:0.2px #222;"><span style="transform:scaleX(0.9400);transform-origin:100% 0">14:10</span></div>
<div class="t" id="t267" style="left:1088.00px;top:286.90px;font-size:13px;color:#222;width:37.90px;text-align:right;-webkit-text-stroke:0.2px #222;"><span style="transform:scaleX(0.9400);transform-origin:100% 0">9:10</span></div>
<div class="t" id="t268" style="left:1088.00px;top:307.50px;font-size:13px;color:#222;width:37.90px;text-align:right;-webkit-text-stroke:0.2px #222;"><span style="transform:scaleX(0.9400);transform-origin:100% 0">10:10</span></div>
<div class="t" id="t269" style="left:1088.00px;top:328.00px;font-size:13px;color:#222;width:37.90px;text-align:right;-webkit-text-stroke:0.2px #222;"><span style="transform:scaleX(0.9400);transform-origin:100% 0">11:10</span></div>
<div class="t" id="t270" style="left:1088.00px;top:354.75px;font-size:13px;color:#222;width:37.90px;text-align:right;-webkit-text-stroke:0.2px #222;"><span style="transform:scaleX(0.9400);transform-origin:100% 0">12:10</span></div>
<div class="t" id="t271" style="left:1088.00px;top:375.30px;font-size:13px;color:#222;width:37.90px;text-align:right;-webkit-text-stroke:0.2px #222;"><span style="transform:scaleX(0.9400);transform-origin:100% 0">13:10</span></div>
<div class="t" id="t272" style="left:1088.00px;top:395.85px;font-size:13px;color:#222;width:37.90px;text-align:right;-webkit-text-stroke:0.2px #222;"><span style="transform:scaleX(0.9400);transform-origin:100% 0">14:10</span></div>
<div class="t" id="t273" style="left:1088.00px;top:416.40px;font-size:13px;color:#222;width:37.90px;text-align:right;-webkit-text-stroke:0.2px #222;"><span style="transform:scaleX(0.9400);transform-origin:100% 0">15:10</span></div>
<div class="t" id="t274" style="left:1127.70px;top:286.90px;font-size:13px;color:#222;width:49.90px;text-align:right;-webkit-text-stroke:0.2px #222;"><span style="transform:scaleX(0.9400);transform-origin:100% 0">10:10</span></div>
<div class="t" id="t275" style="left:1127.70px;top:307.50px;font-size:13px;color:#222;width:49.90px;text-align:right;-webkit-text-stroke:0.2px #222;"><span style="transform:scaleX(0.9400);transform-origin:100% 0">11:10</span></div>
<div class="t" id="t276" style="left:1127.70px;top:328.00px;font-size:13px;color:#222;width:49.90px;text-align:right;-webkit-text-stroke:0.2px #222;"><span style="transform:scaleX(0.9400);transform-origin:100% 0">12:10</span></div>
<div class="t" id="t277" style="left:1127.70px;top:354.75px;font-size:13px;color:#222;width:49.90px;text-align:right;-webkit-text-stroke:0.2px #222;"><span style="transform:scaleX(0.9400);transform-origin:100% 0">13:10</span></div>
<div class="t" id="t278" style="left:1127.70px;top:375.30px;font-size:13px;color:#222;width:49.90px;text-align:right;-webkit-text-stroke:0.2px #222;"><span style="transform:scaleX(0.9400);transform-origin:100% 0">14:10</span></div>
<div class="t" id="t279" style="left:1127.70px;top:395.85px;font-size:13px;color:#222;width:49.90px;text-align:right;-webkit-text-stroke:0.2px #222;"><span style="transform:scaleX(0.9400);transform-origin:100% 0">15:10</span></div>
<div class="t" id="t280" style="left:1127.70px;top:416.40px;font-size:13px;color:#222;width:49.90px;text-align:right;-webkit-text-stroke:0.2px #222;"><span style="transform:scaleX(0.9400);transform-origin:100% 0">16:10</span></div>
<div class="t" id="t281" style="left:1179.40px;top:286.90px;font-size:13px;color:#222;width:71.40px;text-align:right;-webkit-text-stroke:0.2px #222;"><span style="transform:scaleX(0.9400);transform-origin:100% 0">11:10</span></div>
<div class="t" id="t282" style="left:1179.40px;top:307.50px;font-size:13px;color:#222;width:71.40px;text-align:right;-webkit-text-stroke:0.2px #222;"><span style="transform:scaleX(0.9400);transform-origin:100% 0">12:10</span></div>
<div class="t" id="t283" style="left:1179.40px;top:328.00px;font-size:13px;color:#222;width:71.40px;text-align:right;-webkit-text-stroke:0.2px #222;"><span style="transform:scaleX(0.9400);transform-origin:100% 0">13:10</span></div>
<div class="t" id="t284" style="left:1179.40px;top:354.75px;font-size:13px;color:#222;width:71.40px;text-align:right;-webkit-text-stroke:0.2px #222;"><span style="transform:scaleX(0.9400);transform-origin:100% 0">14:10</span></div>
<div class="t" id="t285" style="left:1179.40px;top:375.30px;font-size:13px;color:#222;width:71.40px;text-align:right;-webkit-text-stroke:0.2px #222;"><span style="transform:scaleX(0.9400);transform-origin:100% 0">15:10</span></div>
<div class="t" id="t286" style="left:1179.40px;top:395.85px;font-size:13px;color:#222;width:71.40px;text-align:right;-webkit-text-stroke:0.2px #222;"><span style="transform:scaleX(0.9400);transform-origin:100% 0">16:10</span></div>
<div class="t" id="t287" style="left:1179.40px;top:416.40px;font-size:13px;color:#222;width:71.40px;text-align:right;-webkit-text-stroke:0.2px #222;"><span style="transform:scaleX(0.9400);transform-origin:100% 0">17:10</span></div>
<div class="t" id="t288" style="left:1253.80px;top:286.90px;font-size:13px;color:#222;-webkit-text-stroke:0.2px #222;"><span style="transform:scaleX(0.9400);transform-origin:0 0">12:10</span></div>
<div class="t" id="t289" style="left:1253.80px;top:307.50px;font-size:13px;color:#222;-webkit-text-stroke:0.2px #222;"><span style="transform:scaleX(0.9400);transform-origin:0 0">13:10</span></div>
<div class="t" id="t290" style="left:1253.80px;top:328.00px;font-size:13px;color:#222;-webkit-text-stroke:0.2px #222;"><span style="transform:scaleX(0.9400);transform-origin:0 0">14:10</span></div>
<div class="t" id="t291" style="left:1253.80px;top:354.75px;font-size:13px;color:#222;-webkit-text-stroke:0.2px #222;"><span style="transform:scaleX(0.9400);transform-origin:0 0">15:10</span></div>
<div class="t" id="t292" style="left:1253.80px;top:375.30px;font-size:13px;color:#222;-webkit-text-stroke:0.2px #222;"><span style="transform:scaleX(0.9400);transform-origin:0 0">16:10</span></div>
<div class="t" id="t293" style="left:1253.80px;top:395.85px;font-size:13px;color:#222;-webkit-text-stroke:0.2px #222;"><span style="transform:scaleX(0.9400);transform-origin:0 0">17:10</span></div>
<div class="t" id="t294" style="left:1253.80px;top:416.40px;font-size:13px;color:#222;-webkit-text-stroke:0.2px #222;"><span style="transform:scaleX(0.9400);transform-origin:0 0">18:10</span></div>
<div class="r" style="left:1267.00px;top:236.00px;width:20.00px;height:482.00px;background:#fff;"></div>
<div class="r" style="left:371.50px;top:236.50px;width:1.50px;height:509.50px;background:#ececec;"></div>
<div class="r" style="left:373.00px;top:236.50px;width:3.00px;height:509.50px;background:#d2d2d2;"></div>
<div class="r" style="left:21.00px;top:344.50px;width:1246.00px;height:1.50px;background:#eeeeee;"></div>
<div class="r" style="left:21.00px;top:346.00px;width:1246.00px;height:3.00px;background:#d6d6d6;"></div>
<div class="r" style="left:371.50px;top:344.50px;width:4.50px;height:4.50px;background:#d2d2d2;"></div>
<div class="r" style="left:44.00px;top:343.00px;width:327.50px;height:1.00px;background:#3cb371;"></div>
<div class="r" style="left:370.30px;top:342.80px;width:1.80px;height:1.80px;background:#1d6b3d;"></div>
<div class="r" style="left:424.00px;top:343.00px;width:843.00px;height:1.00px;background:#3cb371;"></div>
<div class="r" style="left:375.80px;top:343.30px;width:48.00px;height:1.80px;background:#1d6b3d;"></div>
<div class="r" style="left:44.00px;top:349.20px;width:327.50px;height:1.00px;background:#3cb371;"></div>
<div class="r" style="left:423.50px;top:349.20px;width:843.50px;height:1.00px;background:#3cb371;"></div>
<div class="r" style="left:370.30px;top:349.40px;width:1.80px;height:22.10px;background:#1d6b3d;"></div>
<div class="r" style="left:422.20px;top:349.40px;width:1.80px;height:17.30px;background:#1d6b3d;"></div>
<div class="r" style="left:375.80px;top:370.00px;width:43.50px;height:2.00px;background:#1d6b3d;"></div>
<div class="r" style="left:419.80px;top:367.80px;width:5.30px;height:5.20px;background:#1d6b3d;"></div>
<div class="r" style="left:1267.00px;top:236.50px;width:20.00px;height:482.00px;background:#f0f0f0;"></div>
<div class="r" style="left:1267.00px;top:236.50px;width:1.00px;height:482.00px;background:#c6c6c6;"></div>
<div class="r" style="left:1270.50px;top:239.50px;width:13.50px;height:13.50px;background:#fff;border:1px solid #c6c6c6;box-sizing:border-box;"></div>
<svg class="r" style="left:1273px;top:243px;" width="8" height="6" viewBox="0 0 8 6"><path d="M0.5 5 L4 1 L7.5 5 Z" fill="#777"/></svg>
<div class="r" style="left:1270.50px;top:253.00px;width:13.50px;height:18.00px;background:#fff;border:1px solid #c6c6c6;box-sizing:border-box;"></div>
<div class="r" style="left:1270.50px;top:330.00px;width:13.50px;height:13.50px;background:#fff;border:1px solid #c6c6c6;box-sizing:border-box;"></div>
<svg class="r" style="left:1273px;top:334px;" width="8" height="6" viewBox="0 0 8 6"><path d="M0.5 1 L4 5 L7.5 1 Z" fill="#777"/></svg>
<div class="r" style="left:1267.00px;top:344.50px;width:20.00px;height:4.50px;background:#d6d6d6;"></div>
<div class="r" style="left:1270.50px;top:351.80px;width:13.50px;height:13.50px;background:#fff;border:1px solid #c6c6c6;box-sizing:border-box;"></div>
<svg class="r" style="left:1273px;top:355px;" width="8" height="6" viewBox="0 0 8 6"><path d="M0.5 5 L4 1 L7.5 5 Z" fill="#777"/></svg>
<div class="r" style="left:1270.50px;top:431.40px;width:13.50px;height:272.00px;background:#fff;border:1px solid #c6c6c6;box-sizing:border-box;"></div>
<div class="r" style="left:1270.50px;top:704.00px;width:13.50px;height:14.00px;background:#fff;border:1px solid #c6c6c6;box-sizing:border-box;"></div>
<svg class="r" style="left:1273px;top:709px;" width="8" height="6" viewBox="0 0 8 6"><path d="M0.5 1 L4 5 L7.5 1 Z" fill="#777"/></svg>
<div class="r" style="left:21.00px;top:718.80px;width:1266.00px;height:27.50px;background:#f3f3f3;"></div>
<svg class="r" style="left:44px;top:727px;" width="8" height="10" viewBox="0 0 8 10"><path d="M6 0.5 L1.5 5 L6 9.5 Z" fill="#c6c6c6"/></svg>
<svg class="r" style="left:71px;top:727px;" width="8" height="10" viewBox="0 0 8 10"><path d="M1.5 0.5 L6 5 L1.5 9.5 Z" fill="#217346"/></svg>
<div class="r" style="left:114.00px;top:721.50px;width:1.00px;height:20.00px;background:#c6c6c6;"></div>
<div class="t" id="t295" style="left:124.80px;top:725.30px;font-size:13px;color:#444;"><span style="transform:scaleX(0.9671);transform-origin:0 0">comparisc</span></div>
<div class="r" style="left:178.60px;top:724.00px;width:6.00px;height:18.00px;background:#f3f3f3;"></div>
<div class="r" style="left:187.60px;top:733.60px;width:2.70px;height:2.90px;background:#217346;"></div>
<div class="r" style="left:191.50px;top:733.60px;width:2.70px;height:2.90px;background:#217346;"></div>
<div class="r" style="left:195.30px;top:733.60px;width:2.70px;height:2.90px;background:#217346;"></div>
<svg class="r" style="left:209px;top:724px;" width="17" height="17" viewBox="0 0 17 17"><circle cx="8.5" cy="8.5" r="7.3" fill="none" stroke="#777" stroke-width="1.3"/><path d="M8.5 4.5 V12.5 M4.5 8.5 H12.5" stroke="#555" stroke-width="1.5"/></svg>
<svg class="r" style="left:242px;top:726px;" width="4" height="14" viewBox="0 0 4 14"><circle cx="2" cy="2" r="0.9" fill="#999"/><circle cx="2" cy="7" r="0.9" fill="#999"/><circle cx="2" cy="12" r="0.9" fill="#999"/></svg>
<div class="r" style="left:259.50px;top:725.20px;width:111.50px;height:15.30px;background:#e9e9e9;"></div>
<div class="r" style="left:259.50px;top:725.20px;width:14.00px;height:15.30px;background:#fff;border:1px solid #c6c6c6;box-sizing:border-box;"></div>
<svg class="r" style="left:263px;top:728px;" width="6" height="8" viewBox="0 0 6 8"><path d="M5 0.5 L1 4 L5 7.5 Z" fill="#555"/></svg>
<div class="r" style="left:273.00px;top:725.20px;width:21.00px;height:15.30px;background:#fff;border:1px solid #c6c6c6;box-sizing:border-box;"></div>
<div class="r" style="left:357.00px;top:725.20px;width:14.00px;height:15.30px;background:#fff;border:1px solid #c6c6c6;box-sizing:border-box;"></div>
<svg class="r" style="left:362px;top:728px;" width="6" height="8" viewBox="0 0 6 8"><path d="M1 0.5 L5 4 L1 7.5 Z" fill="#555"/></svg>
<div class="r" style="left:378.00px;top:725.20px;width:890.00px;height:15.30px;background:#e9e9e9;"></div>
<div class="r" style="left:378.00px;top:725.20px;width:14.00px;height:15.30px;background:#fff;border:1px solid #c6c6c6;box-sizing:border-box;"></div>
<svg class="r" style="left:382px;top:728px;" width="6" height="8" viewBox="0 0 6 8"><path d="M5 0.5 L1 4 L5 7.5 Z" fill="#555"/></svg>
<div class="r" style="left:552.20px;top:725.20px;width:637.50px;height:15.30px;background:#fff;border:1px solid #c6c6c6;box-sizing:border-box;"></div>
<div class="r" style="left:1254.00px;top:725.20px;width:14.00px;height:15.30px;background:#fff;border:1px solid #c6c6c6;box-sizing:border-box;"></div>
<svg class="r" style="left:1259px;top:728px;" width="6" height="8" viewBox="0 0 6 8"><path d="M1 0.5 L5 4 L1 7.5 Z" fill="#555"/></svg>
<div class="r" style="left:21.00px;top:746.80px;width:1266.00px;height:22.40px;background:#217346;"></div>
<div class="t" id="t296" style="left:26.30px;top:751.84px;font-size:12px;color:#fff;"><span style="transform:scaleX(0.7643);transform-origin:0 0">READY</span></div>
<div class="r" style="left:1016.30px;top:746.80px;width:35.20px;height:22.40px;background:#17643a;"></div>
<svg class="r" style="left:1027px;top:750px;" width="14" height="14" viewBox="0 0 14 14"><rect x="0.7" y="0.7" width="12" height="12" rx="1" fill="none" stroke="#fff" stroke-width="1.3"/><path d="M4.8 0.7 V12.7 M8.8 0.7 V12.7 M0.7 4.8 H12.7 M0.7 8.8 H12.7" stroke="#fff" stroke-width="1.3"/></svg>
<svg class="r" style="left:1062px;top:750px;" width="15" height="14" viewBox="0 0 15 14"><rect x="0.7" y="0.7" width="12.5" height="12.5" fill="none" stroke="#fff" stroke-width="1.2"/><rect x="3" y="2.8" width="8" height="8.5" fill="none" stroke="#d9e8de" stroke-width="1"/><path d="M5 5 H9 M5 7 H9 M5 9 H9" stroke="#cfe0d5" stroke-width="0.9"/></svg>
<svg class="r" style="left:1097px;top:750px;" width="15" height="14" viewBox="0 0 15 14"><rect x="0.7" y="0.7" width="12.5" height="12.5" fill="none" stroke="#fff" stroke-width="1.2"/><rect x="0.7" y="0.7" width="8" height="7" fill="#fff"/><path d="M3.3 0.7 V7.7 M5.8 0.7 V7.7" stroke="#217346" stroke-width="0.9"/></svg>
<div class="r" style="left:1126.50px;top:756.50px;width:5.50px;height:2.00px;background:#fff;"></div>
<div class="r" style="left:1136.00px;top:757.00px;width:92.00px;height:1.00px;background:#fff;"></div>
<div class="r" style="left:1180.50px;top:751.40px;width:3.80px;height:12.00px;background:#fff;"></div>
<svg class="r" style="left:1231px;top:751px;" width="11" height="11" viewBox="0 0 11 11"><path d="M5.5 1 V10 M1 5.5 H10" stroke="#fff" stroke-width="2"/></svg>
<div class="t" id="t297" style="left:1254.00px;top:751.84px;font-size:12px;color:#fff;"><span style="transform:scaleX(0.8338);transform-origin:0 0">100%</span></div>
<div class="r" style="left:643.60px;top:169.00px;width:197.60px;height:70.00px;background:#fff;border:1px solid #c6c6c6;box-sizing:border-box;box-shadow:1px 1px 2px rgba(0,0,0,0.12);"></div>
<div class="t" id="t298" style="left:654.20px;top:178.54px;font-size:12px;color:#444;font-weight:bold;"><span style="transform:scaleX(0.9000);transform-origin:0 0">Split</span></div>
<div class="t" id="t299" style="left:654.20px;top:200.77px;font-size:11.5px;color:#555;"><span style="transform:scaleX(0.9926);transform-origin:0 0">Divide the window into different</span></div>
<div class="t" id="t300" style="left:654.20px;top:216.07px;font-size:11.5px;color:#555;"><span style="transform:scaleX(0.9427);transform-origin:0 0">panes that each scroll separately.</span></div>
</body></html>
